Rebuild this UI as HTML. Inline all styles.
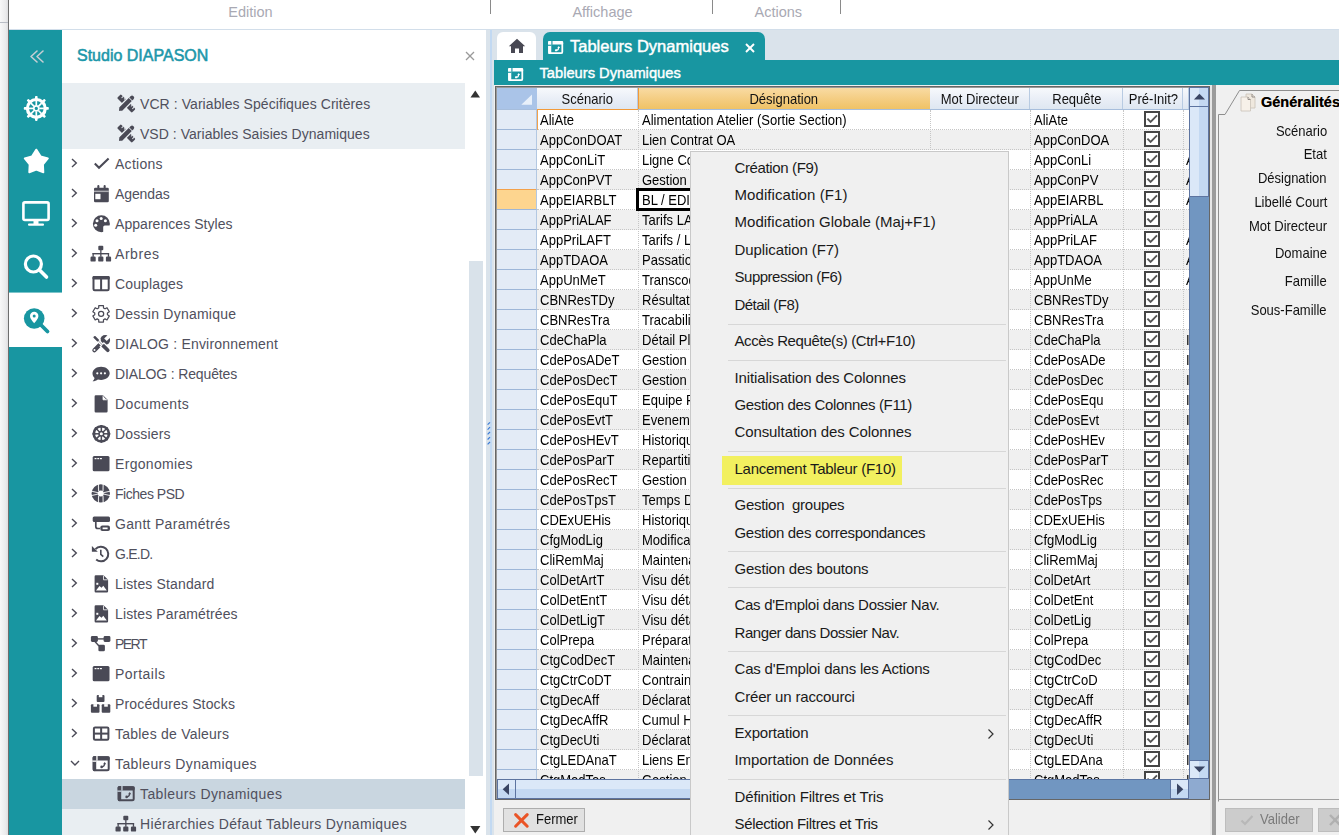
<!DOCTYPE html><html><head><meta charset="utf-8"><style>
html,body{margin:0;padding:0;}
body{width:1339px;height:835px;overflow:hidden;position:relative;background:#fff;font-family:"Liberation Sans",sans-serif;}
.t{position:absolute;white-space:pre;}
.b{position:absolute;}
svg{position:absolute;overflow:visible;}
</style></head><body>
<div class="b" style="left:0px;top:0px;width:8px;height:835px;background:linear-gradient(90deg,#f8f8f8,#ebebec 70%,#dedee0);"></div>
<div class="b" style="left:0px;top:22px;width:8px;height:1px;background:#b9bdc5;"></div>
<div class="b" style="left:8px;top:0px;width:1px;height:835px;background:#6e6e6e;"></div>
<div class="b" style="left:9px;top:29px;width:1330px;height:1px;background:#d2deea;"></div>
<div class="b" style="left:490px;top:0px;width:1px;height:14px;background:#8a8a8a;"></div>
<div class="b" style="left:712px;top:0px;width:1px;height:14px;background:#8a8a8a;"></div>
<div class="b" style="left:840px;top:0px;width:1px;height:14px;background:#8a8a8a;"></div>
<div class="t" style="left:190.5px;width:120px;text-align:center;top:2.98px;font-size:14.5px;line-height:19px;color:#a9a9b3;">Edition</div>
<div class="t" style="left:542.5px;width:120px;text-align:center;top:2.98px;font-size:14.5px;line-height:19px;color:#a9a9b3;">Affichage</div>
<div class="t" style="left:718.3px;width:120px;text-align:center;top:2.98px;font-size:14.5px;line-height:19px;color:#a9a9b3;">Actions</div>
<div class="b" style="left:9px;top:30px;width:52.5px;height:805px;background:#1896a1;"></div>
<div class="b" style="left:9px;top:292px;width:52.5px;height:1px;background:#7cc4ca;"></div>
<div class="b" style="left:9px;top:293px;width:52.5px;height:54px;background:#fff;"></div>
<svg style="left:0;top:0" width="62" height="360" viewBox="0 0 62 360">
<g fill="none" stroke="#c5ced3" stroke-width="1.6" stroke-linecap="round" stroke-linejoin="round">
<polyline points="37,51 31,56.5 37,62"/><polyline points="43,51 37,56.5 43,62"/></g>
<g transform="translate(36.3,108.4)"><circle r="8.9" fill="none" stroke="#fff" stroke-width="3.2"/><rect x="-1.3" y="-12.5" width="2.6" height="4" rx="0.8" fill="#fff" transform="rotate(0)"/><line x1="0" y1="-3" x2="0" y2="-7.6" stroke="#fff" stroke-width="1.7" transform="rotate(0)"/><rect x="-1.3" y="-12.5" width="2.6" height="4" rx="0.8" fill="#fff" transform="rotate(45)"/><line x1="0" y1="-3" x2="0" y2="-7.6" stroke="#fff" stroke-width="1.7" transform="rotate(45)"/><rect x="-1.3" y="-12.5" width="2.6" height="4" rx="0.8" fill="#fff" transform="rotate(90)"/><line x1="0" y1="-3" x2="0" y2="-7.6" stroke="#fff" stroke-width="1.7" transform="rotate(90)"/><rect x="-1.3" y="-12.5" width="2.6" height="4" rx="0.8" fill="#fff" transform="rotate(135)"/><line x1="0" y1="-3" x2="0" y2="-7.6" stroke="#fff" stroke-width="1.7" transform="rotate(135)"/><rect x="-1.3" y="-12.5" width="2.6" height="4" rx="0.8" fill="#fff" transform="rotate(180)"/><line x1="0" y1="-3" x2="0" y2="-7.6" stroke="#fff" stroke-width="1.7" transform="rotate(180)"/><rect x="-1.3" y="-12.5" width="2.6" height="4" rx="0.8" fill="#fff" transform="rotate(225)"/><line x1="0" y1="-3" x2="0" y2="-7.6" stroke="#fff" stroke-width="1.7" transform="rotate(225)"/><rect x="-1.3" y="-12.5" width="2.6" height="4" rx="0.8" fill="#fff" transform="rotate(270)"/><line x1="0" y1="-3" x2="0" y2="-7.6" stroke="#fff" stroke-width="1.7" transform="rotate(270)"/><rect x="-1.3" y="-12.5" width="2.6" height="4" rx="0.8" fill="#fff" transform="rotate(315)"/><line x1="0" y1="-3" x2="0" y2="-7.6" stroke="#fff" stroke-width="1.7" transform="rotate(315)"/><circle r="2.5" fill="none" stroke="#fff" stroke-width="1.7"/></g>
<path fill="#fff" d="M36.3,149.6 L40.6,156.3 L47.9,158.4 L43,164.4 L43.4,172.3 L36.3,169.6 L29.2,172.3 L29.6,164.4 L24.7,158.4 L32,156.3 Z" stroke="#fff" stroke-width="1.8" stroke-linejoin="round"/>
<rect x="23.4" y="202.4" width="25.2" height="17.6" rx="1.5" fill="none" stroke="#fff" stroke-width="2.6"/>
<rect x="33.5" y="221" width="5" height="3.5" fill="#fff"/>
<rect x="28" y="223.6" width="16" height="2.2" rx="1" fill="#fff"/>
<circle cx="33.4" cy="264" r="8" fill="none" stroke="#fff" stroke-width="3.2"/>
<line x1="39.5" y1="270" x2="46.5" y2="277" stroke="#fff" stroke-width="3.6" stroke-linecap="round"/>
<circle cx="34.2" cy="318.5" r="10.3" fill="#1896a1"/>
<line x1="41" y1="325" x2="47.5" y2="331.5" stroke="#1896a1" stroke-width="3.8" stroke-linecap="round"/>
<path d="M34.2,311.8 a4.2,4.2 0 0 1 4.2,4.2 c0,3 -4.2,7.2 -4.2,7.2 c0,0 -4.2,-4.2 -4.2,-7.2 a4.2,4.2 0 0 1 4.2,-4.2 z" fill="#fff"/>
<circle cx="34.2" cy="316" r="1.5" fill="#1896a1"/>
</svg>
<div class="b" style="left:61.5px;top:30px;width:424.5px;height:805px;background:#fff;"></div>
<div class="t" style="left:77px;top:45.36px;font-size:16px;line-height:21px;color:#1d97aa;-webkit-text-stroke:0.55px #1d97aa;">Studio DIAPASON</div>
<svg style="left:464px;top:50px" width="12" height="12"><g stroke="#9a9a9a" stroke-width="1.3"><line x1="2" y1="2" x2="10" y2="10"/><line x1="10" y1="2" x2="2" y2="10"/></g></svg>
<div class="b" style="left:62px;top:83px;width:403px;height:66px;background:#e9eef2;"></div>
<div class="b" style="left:62px;top:779px;width:403px;height:30px;background:#c9d6e0;"></div>
<div class="b" style="left:62px;top:809px;width:403px;height:26px;background:#e9eef2;"></div>
<svg style="left:116px;top:94.8px" width="20" height="18" viewBox="0 0 20 18"><g transform="translate(10.3,8.5) scale(0.9) rotate(45)" fill="#4a4a56"><rect x="-11.6" y="-3" width="23.2" height="6" rx="1.2"/><g fill="#e9eef2"><rect x="-8.6" y="-3.2" width="1.1" height="2.6"/><rect x="-5.4" y="-3.2" width="1.1" height="1.7"/><rect x="5.4" y="-3.2" width="1.1" height="1.7"/><rect x="8.4" y="-3.2" width="1.1" height="2.6"/></g></g><g transform="translate(10.3,8.5) scale(0.9) rotate(-45)"><path d="M-12.6,0 L-8.8,-3.1 L9,-3.1 A3.1,3.1 0 0 1 9,3.1 L-8.8,3.1 Z" fill="#4a4a56" stroke="#e9eef2" stroke-width="1.4"/><rect x="6.3" y="-3.2" width="0.9" height="6.4" fill="#e9eef2"/></g></svg>
<div class="t" style="left:140px;top:94.95px;font-size:14px;line-height:18px;color:#50505d;letter-spacing:0.071px;">VCR : Variables Spécifiques Critères</div>
<svg style="left:116px;top:124.8px" width="20" height="18" viewBox="0 0 20 18"><g transform="translate(10.3,8.5) scale(0.9) rotate(45)" fill="#4a4a56"><rect x="-11.6" y="-3" width="23.2" height="6" rx="1.2"/><g fill="#e9eef2"><rect x="-8.6" y="-3.2" width="1.1" height="2.6"/><rect x="-5.4" y="-3.2" width="1.1" height="1.7"/><rect x="5.4" y="-3.2" width="1.1" height="1.7"/><rect x="8.4" y="-3.2" width="1.1" height="2.6"/></g></g><g transform="translate(10.3,8.5) scale(0.9) rotate(-45)"><path d="M-12.6,0 L-8.8,-3.1 L9,-3.1 A3.1,3.1 0 0 1 9,3.1 L-8.8,3.1 Z" fill="#4a4a56" stroke="#e9eef2" stroke-width="1.4"/><rect x="6.3" y="-3.2" width="0.9" height="6.4" fill="#e9eef2"/></g></svg>
<div class="t" style="left:140px;top:124.95px;font-size:14px;line-height:18px;color:#50505d;letter-spacing:0.036px;">VSD : Variables Saisies Dynamiques</div>
<svg style="left:70px;top:157.5px" width="10" height="10"><polyline points="2,1 6.3,5 2,9" fill="none" stroke="#4a4a56" stroke-width="1.4"/></svg>
<svg style="left:91px;top:154.8px" width="20" height="18" viewBox="0 0 20 18"><polyline points="3.8,8.6 8,12.8 17.6,3.6" fill="none" stroke="#4a4a56" stroke-width="2.1"/></svg>
<div class="t" style="left:115px;top:154.95px;font-size:14px;line-height:18px;color:#50505d;letter-spacing:0.280px;">Actions</div>
<svg style="left:70px;top:187.5px" width="10" height="10"><polyline points="2,1 6.3,5 2,9" fill="none" stroke="#4a4a56" stroke-width="1.4"/></svg>
<svg style="left:91px;top:184.8px" width="20" height="18" viewBox="0 0 20 18"><g fill="#4a4a56"><rect x="3" y="2.7" width="14.8" height="14.5" rx="1.3"/><rect x="6.3" y="0.1" width="2.1" height="3.5" rx="1"/><rect x="12.6" y="0.1" width="2.1" height="3.5" rx="1"/></g><rect x="3" y="5.6" width="14.8" height="1.5" fill="#fff" fill-opacity="0.55"/><rect x="4.3" y="8.8" width="5.2" height="5.4" fill="#fff"/></svg>
<div class="t" style="left:115px;top:184.95px;font-size:14px;line-height:18px;color:#50505d;letter-spacing:-0.097px;">Agendas</div>
<svg style="left:70px;top:217.5px" width="10" height="10"><polyline points="2,1 6.3,5 2,9" fill="none" stroke="#4a4a56" stroke-width="1.4"/></svg>
<svg style="left:91px;top:214.8px" width="20" height="18" viewBox="0 0 20 18"><defs><mask id="pm223"><rect width="20" height="18" fill="#fff"/><rect x="12.2" y="10.5" width="10" height="10" rx="1.6" fill="#000"/><circle cx="6" cy="5.7" r="1.5" fill="#000"/><circle cx="10.2" cy="3.5" r="1.5" fill="#000"/><circle cx="14.4" cy="5.7" r="1.5" fill="#000"/><circle cx="4.7" cy="10.2" r="1.5" fill="#000"/></mask></defs><circle cx="10.4" cy="8.8" r="8.5" fill="#4a4a56" mask="url(#pm223)"/></svg>
<div class="t" style="left:115px;top:214.95px;font-size:14px;line-height:18px;color:#50505d;letter-spacing:0.048px;">Apparences Styles</div>
<svg style="left:70px;top:247.5px" width="10" height="10"><polyline points="2,1 6.3,5 2,9" fill="none" stroke="#4a4a56" stroke-width="1.4"/></svg>
<svg style="left:91px;top:244.8px" width="20" height="18" viewBox="0 0 20 18"><g fill="#4a4a56"><rect x="7.3" y="0.8" width="5" height="4.4" rx="1"/><rect x="-0.5" y="11.6" width="5.2" height="5" rx="1.2"/><rect x="7.2" y="11.6" width="5.2" height="5" rx="1.2"/><rect x="14.9" y="11.6" width="5.2" height="5" rx="1.2"/><rect x="9.2" y="5" width="1.3" height="6.8"/><rect x="1.5" y="8" width="16.6" height="1.4"/><rect x="1.5" y="8" width="1.3" height="3.8"/><rect x="16.8" y="8" width="1.3" height="3.8"/></g></svg>
<div class="t" style="left:115px;top:244.95px;font-size:14px;line-height:18px;color:#50505d;letter-spacing:0.553px;">Arbres</div>
<svg style="left:70px;top:277.5px" width="10" height="10"><polyline points="2,1 6.3,5 2,9" fill="none" stroke="#4a4a56" stroke-width="1.4"/></svg>
<svg style="left:91px;top:274.8px" width="20" height="18" viewBox="0 0 20 18"><rect x="2.5" y="2.1" width="15.2" height="13.1" rx="1.2" fill="none" stroke="#4a4a56" stroke-width="2"/><rect x="1.5" y="1.1" width="17.2" height="3.3" rx="1.2" fill="#4a4a56"/><rect x="9.1" y="3" width="2" height="12" fill="#4a4a56"/></svg>
<div class="t" style="left:115px;top:274.95px;font-size:14px;line-height:18px;color:#50505d;letter-spacing:0.133px;">Couplages</div>
<svg style="left:70px;top:307.5px" width="10" height="10"><polyline points="2,1 6.3,5 2,9" fill="none" stroke="#4a4a56" stroke-width="1.4"/></svg>
<svg style="left:91px;top:304.8px" width="20" height="18" viewBox="0 0 20 18"><path d="M7.76,0.68 L12.44,0.68 L12.50,2.92 L14.04,3.81 L16.00,2.74 L18.35,6.79 L16.44,7.96 L16.44,9.74 L18.35,10.91 L16.00,14.96 L14.04,13.89 L12.50,14.78 L12.44,17.02 L7.76,17.02 L7.70,14.78 L6.16,13.89 L4.20,14.96 L1.85,10.91 L3.76,9.74 L3.76,7.96 L1.85,6.79 L4.20,2.74 L6.16,3.81 L7.70,2.92 Z" fill="none" stroke="#4a4a56" stroke-width="1.25" stroke-linejoin="round"/><circle cx="10.1" cy="8.85" r="2.6" fill="none" stroke="#4a4a56" stroke-width="1.25"/></svg>
<div class="t" style="left:115px;top:304.95px;font-size:14px;line-height:18px;color:#50505d;letter-spacing:0.234px;">Dessin Dynamique</div>
<svg style="left:70px;top:337.5px" width="10" height="10"><polyline points="2,1 6.3,5 2,9" fill="none" stroke="#4a4a56" stroke-width="1.4"/></svg>
<svg style="left:91px;top:334.8px" width="20" height="18" viewBox="0 0 20 18"><line x1="3.4" y1="15.2" x2="12.8" y2="5.8" stroke="#4a4a56" stroke-width="4.2" stroke-linecap="round"/><circle cx="14.2" cy="5" r="4.9" fill="#4a4a56"/><rect x="-1.8" y="-4.5" width="3.6" height="7.5" transform="translate(16.6,2.6) rotate(45)" fill="#fff"/><circle cx="3.5" cy="15.1" r="1" fill="#fff"/><g transform="translate(10.4,8.95) rotate(45)" stroke="#fff" stroke-width="1.3" fill="#4a4a56"><path d="M-3.6,-0.9 L1,-0.9 L1,-2.5 L9,-2.5 A2.5,2.5 0 0 1 9,2.5 L1,2.5 L1,0.9 L-3.6,0.9 L-3.6,1.9 L-10.6,1.9 L-11.4,0 L-10.6,-1.9 L-3.6,-1.9 Z"/></g></svg>
<div class="t" style="left:115px;top:334.95px;font-size:14px;line-height:18px;color:#50505d;letter-spacing:0.202px;">DIALOG : Environnement</div>
<svg style="left:70px;top:367.5px" width="10" height="10"><polyline points="2,1 6.3,5 2,9" fill="none" stroke="#4a4a56" stroke-width="1.4"/></svg>
<svg style="left:91px;top:364.8px" width="20" height="18" viewBox="0 0 20 18"><path fill="#4a4a56" d="M10.1,1.7 C14.9,1.7 18.7,4.6 18.7,8.3 C18.7,12 14.9,14.9 10.1,14.9 C9,14.9 7.9,14.7 6.9,14.4 C5.5,15.5 3.7,16.2 1.6,16.3 C2.6,15.4 3.3,14.3 3.6,13.1 C2.3,11.9 1.5,10.2 1.5,8.3 C1.5,4.6 5.3,1.7 10.1,1.7 Z"/><g fill="#fff"><circle cx="6.3" cy="8.3" r="1.1"/><circle cx="10.1" cy="8.3" r="1.1"/><circle cx="13.9" cy="8.3" r="1.1"/></g></svg>
<div class="t" style="left:115px;top:364.95px;font-size:14px;line-height:18px;color:#50505d;letter-spacing:-0.145px;">DIALOG : Requêtes</div>
<svg style="left:70px;top:397.5px" width="10" height="10"><polyline points="2,1 6.3,5 2,9" fill="none" stroke="#4a4a56" stroke-width="1.4"/></svg>
<svg style="left:91px;top:394.8px" width="20" height="18" viewBox="0 0 20 18"><path fill="#4a4a56" d="M4.8,0.2 L12,0.2 L16.6,4.8 L16.6,16.3 A1.2,1.2 0 0 1 15.4,17.5 L4.8,17.5 A1.2,1.2 0 0 1 3.6,16.3 L3.6,1.4 A1.2,1.2 0 0 1 4.8,0.2 Z"/><path fill="#fff" d="M12,1.2 L12,4.8 L15.6,4.8 Z"/><path d="M12,0.6 L12,4.8 L16.2,4.8" fill="none" stroke="#fff" stroke-width="0.8"/></svg>
<div class="t" style="left:115px;top:394.95px;font-size:14px;line-height:18px;color:#50505d;letter-spacing:0.373px;">Documents</div>
<svg style="left:70px;top:427.5px" width="10" height="10"><polyline points="2,1 6.3,5 2,9" fill="none" stroke="#4a4a56" stroke-width="1.4"/></svg>
<svg style="left:91px;top:424.8px" width="20" height="18" viewBox="0 0 20 18"><g transform="translate(10.35,8.8)"><circle r="7.6" fill="none" stroke="#4a4a56" stroke-width="2.6"/><rect x="-1" y="-8.9" width="2" height="3" rx="0.6" fill="#4a4a56" transform="rotate(0)"/><line x1="0" y1="-2.2" x2="0" y2="-6.5" stroke="#4a4a56" stroke-width="1.5" transform="rotate(0)"/><rect x="-1" y="-8.9" width="2" height="3" rx="0.6" fill="#4a4a56" transform="rotate(45)"/><line x1="0" y1="-2.2" x2="0" y2="-6.5" stroke="#4a4a56" stroke-width="1.5" transform="rotate(45)"/><rect x="-1" y="-8.9" width="2" height="3" rx="0.6" fill="#4a4a56" transform="rotate(90)"/><line x1="0" y1="-2.2" x2="0" y2="-6.5" stroke="#4a4a56" stroke-width="1.5" transform="rotate(90)"/><rect x="-1" y="-8.9" width="2" height="3" rx="0.6" fill="#4a4a56" transform="rotate(135)"/><line x1="0" y1="-2.2" x2="0" y2="-6.5" stroke="#4a4a56" stroke-width="1.5" transform="rotate(135)"/><rect x="-1" y="-8.9" width="2" height="3" rx="0.6" fill="#4a4a56" transform="rotate(180)"/><line x1="0" y1="-2.2" x2="0" y2="-6.5" stroke="#4a4a56" stroke-width="1.5" transform="rotate(180)"/><rect x="-1" y="-8.9" width="2" height="3" rx="0.6" fill="#4a4a56" transform="rotate(225)"/><line x1="0" y1="-2.2" x2="0" y2="-6.5" stroke="#4a4a56" stroke-width="1.5" transform="rotate(225)"/><rect x="-1" y="-8.9" width="2" height="3" rx="0.6" fill="#4a4a56" transform="rotate(270)"/><line x1="0" y1="-2.2" x2="0" y2="-6.5" stroke="#4a4a56" stroke-width="1.5" transform="rotate(270)"/><rect x="-1" y="-8.9" width="2" height="3" rx="0.6" fill="#4a4a56" transform="rotate(315)"/><line x1="0" y1="-2.2" x2="0" y2="-6.5" stroke="#4a4a56" stroke-width="1.5" transform="rotate(315)"/><circle r="2.3" fill="none" stroke="#4a4a56" stroke-width="1.5"/></g></svg>
<div class="t" style="left:115px;top:424.95px;font-size:14px;line-height:18px;color:#50505d;letter-spacing:0.147px;">Dossiers</div>
<svg style="left:70px;top:457.5px" width="10" height="10"><polyline points="2,1 6.3,5 2,9" fill="none" stroke="#4a4a56" stroke-width="1.4"/></svg>
<svg style="left:91px;top:454.8px" width="20" height="18" viewBox="0 0 20 18"><rect x="1.7" y="1.1" width="16.8" height="15.1" rx="1.5" fill="#4a4a56"/><g fill="#fff"><rect x="3.6" y="3" width="1.9" height="1.2"/><rect x="6.3" y="3" width="1.9" height="1.2"/><rect x="9" y="3" width="1.9" height="1.2"/></g></svg>
<div class="t" style="left:115px;top:454.95px;font-size:14px;line-height:18px;color:#50505d;letter-spacing:0.322px;">Ergonomies</div>
<svg style="left:70px;top:487.5px" width="10" height="10"><polyline points="2,1 6.3,5 2,9" fill="none" stroke="#4a4a56" stroke-width="1.4"/></svg>
<svg style="left:91px;top:484.8px" width="20" height="18" viewBox="0 0 20 18"><g transform="translate(9.8,8.4)"><circle r="9.2" fill="#4a4a56"/><circle r="3" fill="#fff"/><g stroke="#fff" stroke-width="1.1" stroke-opacity="0.85"><line x1="-10" y1="-2.4" x2="-2.6" y2="-0.6"/><line x1="-10" y1="2.4" x2="-2.6" y2="0.6"/><line x1="10" y1="-2.4" x2="2.6" y2="-0.6"/><line x1="10" y1="2.4" x2="2.6" y2="0.6"/><line x1="-2.4" y1="-10" x2="-2.2" y2="-2.4"/><line x1="2.4" y1="-10" x2="2.2" y2="-2.4"/><line x1="-2.4" y1="10" x2="-2.2" y2="2.4"/><line x1="2.4" y1="10" x2="2.2" y2="2.4"/></g></g></svg>
<div class="t" style="left:115px;top:484.95px;font-size:14px;line-height:18px;color:#50505d;letter-spacing:-0.469px;">Fiches PSD</div>
<svg style="left:70px;top:517.5px" width="10" height="10"><polyline points="2,1 6.3,5 2,9" fill="none" stroke="#4a4a56" stroke-width="1.4"/></svg>
<svg style="left:91px;top:514.8px" width="20" height="18" viewBox="0 0 20 18"><rect x="1.7" y="1.5" width="17.3" height="5.6" rx="1.5" fill="#4a4a56"/><path d="M4.8,7 L4.8,11.5 A2,2 0 0 0 6.8,13.5 L9,13.5" fill="none" stroke="#4a4a56" stroke-width="1.7"/><rect x="9.3" y="10.6" width="9.7" height="5.5" rx="2" fill="#4a4a56"/><rect x="11.6" y="12.5" width="5" height="1.7" fill="#fff"/></svg>
<div class="t" style="left:115px;top:514.95px;font-size:14px;line-height:18px;color:#50505d;letter-spacing:0.306px;">Gantt Paramétrés</div>
<svg style="left:70px;top:547.5px" width="10" height="10"><polyline points="2,1 6.3,5 2,9" fill="none" stroke="#4a4a56" stroke-width="1.4"/></svg>
<svg style="left:91px;top:544.8px" width="20" height="18" viewBox="0 0 20 18"><path d="M4.5,4.2 A7.3,7.3 0 1 1 5.2,14.6" fill="none" stroke="#4a4a56" stroke-width="2"/><path d="M0.9,0.9 L0.9,6.8 L6.8,6.8 Z" fill="#4a4a56"/><polyline points="9.8,4.8 9.8,9.3 12.3,11.6" fill="none" stroke="#4a4a56" stroke-width="1.6"/></svg>
<div class="t" style="left:115px;top:544.95px;font-size:14px;line-height:18px;color:#50505d;letter-spacing:-0.763px;">G.E.D.</div>
<svg style="left:70px;top:577.5px" width="10" height="10"><polyline points="2,1 6.3,5 2,9" fill="none" stroke="#4a4a56" stroke-width="1.4"/></svg>
<svg style="left:91px;top:574.8px" width="20" height="18" viewBox="0 0 20 18"><path fill="#4a4a56" d="M4.8,0.2 L12.5,0.2 L17.1,4.8 L17.1,16.3 A1.2,1.2 0 0 1 15.9,17.5 L4.8,17.5 A1.2,1.2 0 0 1 3.6,16.3 L3.6,1.4 A1.2,1.2 0 0 1 4.8,0.2 Z"/><path d="M12.5,0.6 L12.5,4.8 L16.7,4.8" fill="none" stroke="#fff" stroke-width="0.8"/><rect x="5.3" y="7.8" width="2" height="2" fill="#fff"/><path d="M5,15.5 L8.5,11 L10.5,12.8 L12.3,10.8 L15.8,15.5 Z" fill="#fff"/></svg>
<div class="t" style="left:115px;top:574.95px;font-size:14px;line-height:18px;color:#50505d;letter-spacing:0.150px;">Listes Standard</div>
<svg style="left:70px;top:607.5px" width="10" height="10"><polyline points="2,1 6.3,5 2,9" fill="none" stroke="#4a4a56" stroke-width="1.4"/></svg>
<svg style="left:91px;top:604.8px" width="20" height="18" viewBox="0 0 20 18"><path fill="#4a4a56" d="M4.8,0.2 L12.5,0.2 L17.1,4.8 L17.1,16.3 A1.2,1.2 0 0 1 15.9,17.5 L4.8,17.5 A1.2,1.2 0 0 1 3.6,16.3 L3.6,1.4 A1.2,1.2 0 0 1 4.8,0.2 Z"/><path d="M12.5,0.6 L12.5,4.8 L16.7,4.8" fill="none" stroke="#fff" stroke-width="0.8"/><rect x="5.3" y="7.8" width="2" height="2" fill="#fff"/><path d="M5,15.5 L8.5,11 L10.5,12.8 L12.3,10.8 L15.8,15.5 Z" fill="#fff"/></svg>
<div class="t" style="left:115px;top:604.95px;font-size:14px;line-height:18px;color:#50505d;letter-spacing:0.118px;">Listes Paramétrées</div>
<svg style="left:70px;top:637.5px" width="10" height="10"><polyline points="2,1 6.3,5 2,9" fill="none" stroke="#4a4a56" stroke-width="1.4"/></svg>
<svg style="left:91px;top:634.8px" width="20" height="18" viewBox="0 0 20 18"><g fill="#4a4a56"><rect x="-0.1" y="1.1" width="7" height="5.8" rx="1.3"/><rect x="12.6" y="1.1" width="6.8" height="5.8" rx="1.3"/><rect x="7.4" y="9.8" width="6.5" height="6.4" rx="1.3"/></g><g stroke="#4a4a56" stroke-width="1.4" fill="none"><line x1="6" y1="3.9" x2="13" y2="3.9"/><path d="M3.5,6 L8,11"/></g></svg>
<div class="t" style="left:115px;top:634.95px;font-size:14px;line-height:18px;color:#50505d;letter-spacing:-1.531px;">PERT</div>
<svg style="left:70px;top:667.5px" width="10" height="10"><polyline points="2,1 6.3,5 2,9" fill="none" stroke="#4a4a56" stroke-width="1.4"/></svg>
<svg style="left:91px;top:664.8px" width="20" height="18" viewBox="0 0 20 18"><rect x="1.7" y="1.1" width="16.8" height="15.1" rx="1.5" fill="#4a4a56"/><g fill="#fff"><rect x="3.6" y="3" width="1.9" height="1.2"/><rect x="6.3" y="3" width="1.9" height="1.2"/><rect x="9" y="3" width="1.9" height="1.2"/></g></svg>
<div class="t" style="left:115px;top:664.95px;font-size:14px;line-height:18px;color:#50505d;letter-spacing:0.473px;">Portails</div>
<svg style="left:70px;top:697.5px" width="10" height="10"><polyline points="2,1 6.3,5 2,9" fill="none" stroke="#4a4a56" stroke-width="1.4"/></svg>
<svg style="left:91px;top:694.8px" width="20" height="18" viewBox="0 0 20 18"><g fill="#4a4a56"><rect x="5.7" y="-0.1" width="7.8" height="7" rx="1"/><rect x="-0.1" y="9.2" width="8.6" height="8.5" rx="1"/><rect x="10.7" y="9.2" width="8.6" height="8.5" rx="1"/></g><g fill="#fff"><rect x="7.8" y="-0.2" width="3.6" height="2.4"/><rect x="2.4" y="9.1" width="3.6" height="2.6"/><rect x="13.2" y="9.1" width="3.6" height="2.6"/></g></svg>
<div class="t" style="left:115px;top:694.95px;font-size:14px;line-height:18px;color:#50505d;letter-spacing:0.150px;">Procédures Stocks</div>
<svg style="left:70px;top:727.5px" width="10" height="10"><polyline points="2,1 6.3,5 2,9" fill="none" stroke="#4a4a56" stroke-width="1.4"/></svg>
<svg style="left:91px;top:724.8px" width="20" height="18" viewBox="0 0 20 18"><rect x="2.9" y="2.4" width="14.5" height="12.4" rx="1.2" fill="none" stroke="#4a4a56" stroke-width="2"/><rect x="9.15" y="2.5" width="2" height="12.3" fill="#4a4a56"/><rect x="2.9" y="7.6" width="14.5" height="2" fill="#4a4a56"/></svg>
<div class="t" style="left:115px;top:724.95px;font-size:14px;line-height:18px;color:#50505d;letter-spacing:0.235px;">Tables de Valeurs</div>
<svg style="left:70px;top:757.5px" width="10" height="10"><polyline points="1,3 5,7 9,3" fill="none" stroke="#4a4a56" stroke-width="1.4"/></svg>
<svg style="left:91px;top:754.8px" width="20" height="18" viewBox="0 0 20 18"><rect x="2.7" y="2.2" width="15" height="13" rx="1.5" fill="none" stroke="#4a4a56" stroke-width="2"/><rect x="1.7" y="1.2" width="17" height="4.2" rx="1.4" fill="#4a4a56"/><rect x="1.7" y="1.2" width="3.5" height="15" rx="1.4" fill="#4a4a56"/><rect x="5.3" y="0.8" width="1.3" height="4.8" fill="#fff"/><rect x="1.3" y="5.5" width="4" height="1.3" fill="#fff"/><path d="M10.3,12 C12.3,12 13.6,10.8 13.6,8.6" fill="none" stroke="#4a4a56" stroke-width="1.3"/><circle cx="10.6" cy="11.9" r="1.3" fill="#4a4a56"/><path d="M12.1,9.2 L13.7,7 L15.2,9.2 Z" fill="#4a4a56"/></svg>
<div class="t" style="left:115px;top:754.95px;font-size:14px;line-height:18px;color:#50505d;letter-spacing:0.387px;">Tableurs Dynamiques</div>
<svg style="left:116px;top:784.8px" width="20" height="18" viewBox="0 0 20 18"><rect x="2.7" y="2.2" width="15" height="13" rx="1.5" fill="none" stroke="#4a4a56" stroke-width="2"/><rect x="1.7" y="1.2" width="17" height="4.2" rx="1.4" fill="#4a4a56"/><rect x="1.7" y="1.2" width="3.5" height="15" rx="1.4" fill="#4a4a56"/><rect x="5.3" y="0.8" width="1.3" height="4.8" fill="#c9d6e0"/><rect x="1.3" y="5.5" width="4" height="1.3" fill="#c9d6e0"/><path d="M10.3,12 C12.3,12 13.6,10.8 13.6,8.6" fill="none" stroke="#4a4a56" stroke-width="1.3"/><circle cx="10.6" cy="11.9" r="1.3" fill="#4a4a56"/><path d="M12.1,9.2 L13.7,7 L15.2,9.2 Z" fill="#4a4a56"/></svg>
<div class="t" style="left:140px;top:784.95px;font-size:14px;line-height:18px;color:#50505d;letter-spacing:0.404px;">Tableurs Dynamiques</div>
<svg style="left:116px;top:814.8px" width="20" height="18" viewBox="0 0 20 18"><g fill="#4a4a56"><rect x="7.3" y="0.8" width="5" height="4.4" rx="1"/><rect x="-0.5" y="11.6" width="5.2" height="5" rx="1.2"/><rect x="7.2" y="11.6" width="5.2" height="5" rx="1.2"/><rect x="14.9" y="11.6" width="5.2" height="5" rx="1.2"/><rect x="9.2" y="5" width="1.3" height="6.8"/><rect x="1.5" y="8" width="16.6" height="1.4"/><rect x="1.5" y="8" width="1.3" height="3.8"/><rect x="16.8" y="8" width="1.3" height="3.8"/></g></svg>
<div class="t" style="left:140px;top:814.95px;font-size:14px;line-height:18px;color:#50505d;letter-spacing:0.338px;">Hiérarchies Défaut Tableurs Dynamiques</div>
<svg style="left:469px;top:89px" width="14" height="10"><path d="M1.5,8.5 L6.3,1.5 L11,8.5 Z" fill="#333"/></svg>
<div class="b" style="left:469px;top:261px;width:14px;height:515px;background:#d9e2ea;"></div>
<svg style="left:469px;top:824px" width="14" height="10"><path d="M1.2,2 L11.4,2 L6.3,9.4 Z" fill="#333"/></svg>
<div class="b" style="left:486px;top:30px;width:9px;height:805px;background:#dae3eb;"></div>
<div class="b" style="left:490px;top:30px;width:2px;height:805px;background:#c2d9f2;"></div>
<svg style="left:485px;top:418px" width="8" height="30"><line x1="2.6" y1="6.7" x2="5" y2="4.3" stroke="#3b7bd6" stroke-width="1.2"/><line x1="2.6" y1="11.6" x2="5" y2="9.2" stroke="#3b7bd6" stroke-width="1.2"/><line x1="2.6" y1="16.4" x2="5" y2="14.0" stroke="#3b7bd6" stroke-width="1.2"/><line x1="2.6" y1="21.5" x2="5" y2="19.1" stroke="#3b7bd6" stroke-width="1.2"/><line x1="2.6" y1="26.4" x2="5" y2="24.0" stroke="#3b7bd6" stroke-width="1.2"/></svg>
<div class="b" style="left:495px;top:30px;width:844px;height:30px;background:#dae3eb;"></div>
<div class="b" style="left:497px;top:32px;width:38.5px;height:28px;background:#fff;border-radius:6px 6px 0 0;"></div>
<svg style="left:508px;top:38px" width="18" height="16" viewBox="0 0 18 16"><path d="M9,0.8 L17.2,8.2 L15,8.2 L15,15 L11,15 L11,10.5 L7,10.5 L7,15 L3,15 L3,8.2 L0.8,8.2 Z" fill="#484853"/></svg>
<div class="b" style="left:542.5px;top:32px;width:222px;height:30px;background:#1896a1;border-radius:7px 7px 0 0;"></div>
<svg style="left:548px;top:40px" width="15" height="15" viewBox="1.5 1 17 15.4"><rect x="2.7" y="2.2" width="15" height="13" rx="1.5" fill="none" stroke="#fff" stroke-width="2"/><rect x="1.7" y="1.2" width="17" height="4.2" rx="1.4" fill="#fff"/><rect x="1.7" y="1.2" width="3.5" height="15" rx="1.4" fill="#fff"/><rect x="5.3" y="0.8" width="1.3" height="4.8" fill="#1896a1"/><rect x="1.3" y="5.5" width="4" height="1.3" fill="#1896a1"/><path d="M10.3,12 C12.3,12 13.6,10.8 13.6,8.6" fill="none" stroke="#fff" stroke-width="1.3"/><circle cx="10.6" cy="11.9" r="1.3" fill="#fff"/><path d="M12.1,9.2 L13.7,7 L15.2,9.2 Z" fill="#fff"/></svg>
<div class="t" style="left:570px;top:35.78px;font-size:16.5px;line-height:21px;color:#fff;-webkit-text-stroke:0.45px #fff;">Tableurs Dynamiques</div>
<svg style="left:745px;top:43px" width="10" height="10"><g stroke="#fff" stroke-width="1.9"><line x1="1" y1="1" x2="9" y2="9"/><line x1="9" y1="1" x2="1" y2="9"/></g></svg>
<div class="b" style="left:494px;top:60px;width:845px;height:25px;background:#1896a1;"></div>
<svg style="left:508px;top:67px" width="15" height="15" viewBox="1.5 1 17 15.4"><rect x="2.7" y="2.2" width="15" height="13" rx="1.5" fill="none" stroke="#fff" stroke-width="2"/><rect x="1.7" y="1.2" width="17" height="4.2" rx="1.4" fill="#fff"/><rect x="1.7" y="1.2" width="3.5" height="15" rx="1.4" fill="#fff"/><rect x="5.3" y="0.8" width="1.3" height="4.8" fill="#1896a1"/><rect x="1.3" y="5.5" width="4" height="1.3" fill="#1896a1"/><path d="M10.3,12 C12.3,12 13.6,10.8 13.6,8.6" fill="none" stroke="#fff" stroke-width="1.3"/><circle cx="10.6" cy="11.9" r="1.3" fill="#fff"/><path d="M12.1,9.2 L13.7,7 L15.2,9.2 Z" fill="#fff"/></svg>
<div class="t" style="left:539.5px;top:64.11px;font-size:14.7px;line-height:19px;color:#fff;-webkit-text-stroke:0.4px #fff;">Tableurs Dynamiques</div>
<div class="b" style="left:494px;top:85px;width:845px;height:750px;background:#f0f0f0;"></div>
<div class="b" style="left:495px;top:86px;width:715px;height:714px;background:#9a9a9a;border:1px solid #666;box-sizing:border-box;"></div>
<div class="b" style="left:497px;top:88px;width:40px;height:22px;background:#aac4e8;"></div>
<svg style="left:497px;top:88px" width="40" height="21"><path d="M35,6.6 L35,16.7 L24.3,16.7 Z" fill="#e8f0fa"/></svg>
<div class="b" style="left:537px;top:88px;width:101px;height:22px;background:linear-gradient(#f7f9fc,#e9eef6 50%,#dde6f1);border-right:1px solid #b8cbe2;box-sizing:border-box;"></div>
<div class="t" style="left:531.2012263099219px;width:112.59754738015607px;text-align:center;top:89.68px;font-size:14.5px;line-height:19px;color:#111;transform:scaleX(0.897);transform-origin:50% 0;">Scénario</div>
<div class="b" style="left:638px;top:88px;width:292px;height:22px;background:linear-gradient(#f9dba3,#f4cd82 50%,#efc163);border-left:1px solid #f29a3a;box-sizing:border-box;"></div>
<div class="t" style="left:621.2352285395764px;width:325.52954292084723px;text-align:center;top:89.68px;font-size:14.5px;line-height:19px;color:#111;transform:scaleX(0.897);transform-origin:50% 0;">Désignation</div>
<div class="b" style="left:930px;top:88px;width:100px;height:22px;background:linear-gradient(#f7f9fc,#e9eef6 50%,#dde6f1);border-right:1px solid #b8cbe2;box-sizing:border-box;"></div>
<div class="t" style="left:924.2586399108138px;width:111.48272017837235px;text-align:center;top:89.68px;font-size:14.5px;line-height:19px;color:#111;transform:scaleX(0.897);transform-origin:50% 0;">Mot Directeur</div>
<div class="b" style="left:1030px;top:88px;width:93px;height:22px;background:linear-gradient(#f7f9fc,#e9eef6 50%,#dde6f1);border-right:1px solid #b8cbe2;box-sizing:border-box;"></div>
<div class="t" style="left:1024.660535117057px;width:103.67892976588628px;text-align:center;top:89.68px;font-size:14.5px;line-height:19px;color:#111;transform:scaleX(0.897);transform-origin:50% 0;">Requête</div>
<div class="b" style="left:1123px;top:88px;width:60px;height:22px;background:linear-gradient(#f7f9fc,#e9eef6 50%,#dde6f1);border-right:1px solid #b8cbe2;box-sizing:border-box;"></div>
<div class="t" style="left:1119.5551839464883px;width:66.88963210702342px;text-align:center;top:89.68px;font-size:14.5px;line-height:19px;color:#111;transform:scaleX(0.897);transform-origin:50% 0;">Pré-Init?</div>
<div class="b" style="left:1183px;top:88px;width:6px;height:22px;background:linear-gradient(#f7f9fc,#e9eef6 50%,#dde6f1);border-right:1px solid #b8cbe2;box-sizing:border-box;"></div>
<div class="b" style="left:497px;top:109px;width:692px;height:1px;background:#a7bedc;"></div>
<div class="b" style="left:537px;top:109px;width:101px;height:1px;background:#f29a3a;"></div>
<div class="b" style="left:497px;top:110px;width:692px;height:669px;overflow:hidden;">
<div class="b" style="left:40px;top:0px;width:652px;height:20px;background:#ffffff;"></div>
<div class="b" style="left:0;top:0px;width:40px;height:20px;background:#e3ebf6;border-bottom:1px solid #9db6d8;border-right:1px solid #b3c8e2;box-sizing:border-box;"></div>
<div class="b" style="left:40px;top:19px;width:652px;height:0;border-top:1px dotted #c6c6c6;"></div>
<div class="t" style="left:43px;top:0.58px;font-size:14.5px;line-height:18px;color:#000;width:107.0px;overflow:hidden;transform:scaleX(0.897);transform-origin:0 0;">AliAte</div>
<div class="t" style="left:144.5px;top:0.58px;font-size:14.5px;line-height:18px;color:#000;width:318.8px;overflow:hidden;transform:scaleX(0.897);transform-origin:0 0;">Alimentation Atelier (Sortie Section)</div>
<div class="t" style="left:537px;top:0.58px;font-size:14.5px;line-height:18px;color:#000;width:95.9px;overflow:hidden;transform:scaleX(0.897);transform-origin:0 0;">AliAte</div>
<svg style="left:647px;top:1px" width="16" height="16"><rect x="1" y="1" width="14" height="14" fill="#fff" stroke="#454545" stroke-width="2"/><polyline points="3.4,7.6 6.6,10.8 13,4.4" fill="none" stroke="#555" stroke-width="1.9"/></svg>
<div class="b" style="left:40px;top:20px;width:652px;height:20px;background:#f0f0f0;"></div>
<div class="b" style="left:0;top:20px;width:40px;height:20px;background:#e3ebf6;border-bottom:1px solid #9db6d8;border-right:1px solid #b3c8e2;box-sizing:border-box;"></div>
<div class="b" style="left:40px;top:39px;width:652px;height:0;border-top:1px dotted #c6c6c6;"></div>
<div class="t" style="left:43px;top:20.58px;font-size:14.5px;line-height:18px;color:#000;width:107.0px;overflow:hidden;transform:scaleX(0.897);transform-origin:0 0;">AppConDOAT</div>
<div class="t" style="left:144.5px;top:20.58px;font-size:14.5px;line-height:18px;color:#000;width:318.8px;overflow:hidden;transform:scaleX(0.897);transform-origin:0 0;">Lien Contrat OA</div>
<div class="t" style="left:537px;top:20.58px;font-size:14.5px;line-height:18px;color:#000;width:95.9px;overflow:hidden;transform:scaleX(0.897);transform-origin:0 0;">AppConDOA</div>
<svg style="left:647px;top:21px" width="16" height="16"><rect x="1" y="1" width="14" height="14" fill="#fff" stroke="#454545" stroke-width="2"/><polyline points="3.4,7.6 6.6,10.8 13,4.4" fill="none" stroke="#555" stroke-width="1.9"/></svg>
<div class="b" style="left:40px;top:40px;width:652px;height:20px;background:#ffffff;"></div>
<div class="b" style="left:0;top:40px;width:40px;height:20px;background:#e3ebf6;border-bottom:1px solid #9db6d8;border-right:1px solid #b3c8e2;box-sizing:border-box;"></div>
<div class="b" style="left:40px;top:59px;width:652px;height:0;border-top:1px dotted #c6c6c6;"></div>
<div class="t" style="left:43px;top:40.58px;font-size:14.5px;line-height:18px;color:#000;width:107.0px;overflow:hidden;transform:scaleX(0.897);transform-origin:0 0;">AppConLiT</div>
<div class="t" style="left:144.5px;top:40.58px;font-size:14.5px;line-height:18px;color:#000;width:318.8px;overflow:hidden;transform:scaleX(0.897);transform-origin:0 0;">Ligne Contrat</div>
<div class="t" style="left:537px;top:40.58px;font-size:14.5px;line-height:18px;color:#000;width:95.9px;overflow:hidden;transform:scaleX(0.897);transform-origin:0 0;">AppConLi</div>
<div class="t" style="left:689px;top:40.58px;font-size:14.5px;line-height:18px;color:#000;width:8.9px;overflow:hidden;transform:scaleX(0.897);transform-origin:0 0;">A</div>
<svg style="left:647px;top:41px" width="16" height="16"><rect x="1" y="1" width="14" height="14" fill="#fff" stroke="#454545" stroke-width="2"/><polyline points="3.4,7.6 6.6,10.8 13,4.4" fill="none" stroke="#555" stroke-width="1.9"/></svg>
<div class="b" style="left:40px;top:60px;width:652px;height:20px;background:#f0f0f0;"></div>
<div class="b" style="left:0;top:60px;width:40px;height:20px;background:#e3ebf6;border-bottom:1px solid #9db6d8;border-right:1px solid #b3c8e2;box-sizing:border-box;"></div>
<div class="b" style="left:40px;top:79px;width:652px;height:0;border-top:1px dotted #c6c6c6;"></div>
<div class="t" style="left:43px;top:60.58px;font-size:14.5px;line-height:18px;color:#000;width:107.0px;overflow:hidden;transform:scaleX(0.897);transform-origin:0 0;">AppConPVT</div>
<div class="t" style="left:144.5px;top:60.58px;font-size:14.5px;line-height:18px;color:#000;width:318.8px;overflow:hidden;transform:scaleX(0.897);transform-origin:0 0;">Gestion PV</div>
<div class="t" style="left:537px;top:60.58px;font-size:14.5px;line-height:18px;color:#000;width:95.9px;overflow:hidden;transform:scaleX(0.897);transform-origin:0 0;">AppConPV</div>
<div class="t" style="left:689px;top:60.58px;font-size:14.5px;line-height:18px;color:#000;width:8.9px;overflow:hidden;transform:scaleX(0.897);transform-origin:0 0;">A</div>
<svg style="left:647px;top:61px" width="16" height="16"><rect x="1" y="1" width="14" height="14" fill="#fff" stroke="#454545" stroke-width="2"/><polyline points="3.4,7.6 6.6,10.8 13,4.4" fill="none" stroke="#555" stroke-width="1.9"/></svg>
<div class="b" style="left:40px;top:80px;width:652px;height:20px;background:#ffffff;"></div>
<div class="b" style="left:0;top:80px;width:40px;height:20px;background:#fdd58f;border-bottom:1px solid #9db6d8;border-right:1px solid #b3c8e2;box-sizing:border-box;"></div>
<div class="b" style="left:40px;top:99px;width:652px;height:0;border-top:1px dotted #c6c6c6;"></div>
<div class="t" style="left:43px;top:80.58px;font-size:14.5px;line-height:18px;color:#000;width:107.0px;overflow:hidden;transform:scaleX(0.897);transform-origin:0 0;">AppEIARBLT</div>
<div class="t" style="left:144.5px;top:80.58px;font-size:14.5px;line-height:18px;color:#000;width:318.8px;overflow:hidden;transform:scaleX(0.897);transform-origin:0 0;">BL / EDI</div>
<div class="t" style="left:537px;top:80.58px;font-size:14.5px;line-height:18px;color:#000;width:95.9px;overflow:hidden;transform:scaleX(0.897);transform-origin:0 0;">AppEIARBL</div>
<div class="t" style="left:689px;top:80.58px;font-size:14.5px;line-height:18px;color:#000;width:8.9px;overflow:hidden;transform:scaleX(0.897);transform-origin:0 0;">A</div>
<svg style="left:647px;top:81px" width="16" height="16"><rect x="1" y="1" width="14" height="14" fill="#fff" stroke="#454545" stroke-width="2"/><polyline points="3.4,7.6 6.6,10.8 13,4.4" fill="none" stroke="#555" stroke-width="1.9"/></svg>
<div class="b" style="left:40px;top:100px;width:652px;height:20px;background:#f0f0f0;"></div>
<div class="b" style="left:0;top:100px;width:40px;height:20px;background:#e3ebf6;border-bottom:1px solid #9db6d8;border-right:1px solid #b3c8e2;box-sizing:border-box;"></div>
<div class="b" style="left:40px;top:119px;width:652px;height:0;border-top:1px dotted #c6c6c6;"></div>
<div class="t" style="left:43px;top:100.58px;font-size:14.5px;line-height:18px;color:#000;width:107.0px;overflow:hidden;transform:scaleX(0.897);transform-origin:0 0;">AppPriALAF</div>
<div class="t" style="left:144.5px;top:100.58px;font-size:14.5px;line-height:18px;color:#000;width:318.8px;overflow:hidden;transform:scaleX(0.897);transform-origin:0 0;">Tarifs LAF</div>
<div class="t" style="left:537px;top:100.58px;font-size:14.5px;line-height:18px;color:#000;width:95.9px;overflow:hidden;transform:scaleX(0.897);transform-origin:0 0;">AppPriALA</div>
<svg style="left:647px;top:101px" width="16" height="16"><rect x="1" y="1" width="14" height="14" fill="#fff" stroke="#454545" stroke-width="2"/><polyline points="3.4,7.6 6.6,10.8 13,4.4" fill="none" stroke="#555" stroke-width="1.9"/></svg>
<div class="b" style="left:40px;top:120px;width:652px;height:20px;background:#ffffff;"></div>
<div class="b" style="left:0;top:120px;width:40px;height:20px;background:#e3ebf6;border-bottom:1px solid #9db6d8;border-right:1px solid #b3c8e2;box-sizing:border-box;"></div>
<div class="b" style="left:40px;top:139px;width:652px;height:0;border-top:1px dotted #c6c6c6;"></div>
<div class="t" style="left:43px;top:120.58px;font-size:14.5px;line-height:18px;color:#000;width:107.0px;overflow:hidden;transform:scaleX(0.897);transform-origin:0 0;">AppPriLAFT</div>
<div class="t" style="left:144.5px;top:120.58px;font-size:14.5px;line-height:18px;color:#000;width:318.8px;overflow:hidden;transform:scaleX(0.897);transform-origin:0 0;">Tarifs / LAF</div>
<div class="t" style="left:537px;top:120.58px;font-size:14.5px;line-height:18px;color:#000;width:95.9px;overflow:hidden;transform:scaleX(0.897);transform-origin:0 0;">AppPriLAF</div>
<div class="t" style="left:689px;top:120.58px;font-size:14.5px;line-height:18px;color:#000;width:8.9px;overflow:hidden;transform:scaleX(0.897);transform-origin:0 0;">A</div>
<svg style="left:647px;top:121px" width="16" height="16"><rect x="1" y="1" width="14" height="14" fill="#fff" stroke="#454545" stroke-width="2"/><polyline points="3.4,7.6 6.6,10.8 13,4.4" fill="none" stroke="#555" stroke-width="1.9"/></svg>
<div class="b" style="left:40px;top:140px;width:652px;height:20px;background:#f0f0f0;"></div>
<div class="b" style="left:0;top:140px;width:40px;height:20px;background:#e3ebf6;border-bottom:1px solid #9db6d8;border-right:1px solid #b3c8e2;box-sizing:border-box;"></div>
<div class="b" style="left:40px;top:159px;width:652px;height:0;border-top:1px dotted #c6c6c6;"></div>
<div class="t" style="left:43px;top:140.58px;font-size:14.5px;line-height:18px;color:#000;width:107.0px;overflow:hidden;transform:scaleX(0.897);transform-origin:0 0;">AppTDAOA</div>
<div class="t" style="left:144.5px;top:140.58px;font-size:14.5px;line-height:18px;color:#000;width:318.8px;overflow:hidden;transform:scaleX(0.897);transform-origin:0 0;">Passation</div>
<div class="t" style="left:537px;top:140.58px;font-size:14.5px;line-height:18px;color:#000;width:95.9px;overflow:hidden;transform:scaleX(0.897);transform-origin:0 0;">AppTDAOA</div>
<div class="t" style="left:689px;top:140.58px;font-size:14.5px;line-height:18px;color:#000;width:8.9px;overflow:hidden;transform:scaleX(0.897);transform-origin:0 0;">A</div>
<svg style="left:647px;top:141px" width="16" height="16"><rect x="1" y="1" width="14" height="14" fill="#fff" stroke="#454545" stroke-width="2"/><polyline points="3.4,7.6 6.6,10.8 13,4.4" fill="none" stroke="#555" stroke-width="1.9"/></svg>
<div class="b" style="left:40px;top:160px;width:652px;height:20px;background:#ffffff;"></div>
<div class="b" style="left:0;top:160px;width:40px;height:20px;background:#e3ebf6;border-bottom:1px solid #9db6d8;border-right:1px solid #b3c8e2;box-sizing:border-box;"></div>
<div class="b" style="left:40px;top:179px;width:652px;height:0;border-top:1px dotted #c6c6c6;"></div>
<div class="t" style="left:43px;top:160.58px;font-size:14.5px;line-height:18px;color:#000;width:107.0px;overflow:hidden;transform:scaleX(0.897);transform-origin:0 0;">AppUnMeT</div>
<div class="t" style="left:144.5px;top:160.58px;font-size:14.5px;line-height:18px;color:#000;width:318.8px;overflow:hidden;transform:scaleX(0.897);transform-origin:0 0;">Transcodage</div>
<div class="t" style="left:537px;top:160.58px;font-size:14.5px;line-height:18px;color:#000;width:95.9px;overflow:hidden;transform:scaleX(0.897);transform-origin:0 0;">AppUnMe</div>
<div class="t" style="left:689px;top:160.58px;font-size:14.5px;line-height:18px;color:#000;width:8.9px;overflow:hidden;transform:scaleX(0.897);transform-origin:0 0;">A</div>
<svg style="left:647px;top:161px" width="16" height="16"><rect x="1" y="1" width="14" height="14" fill="#fff" stroke="#454545" stroke-width="2"/><polyline points="3.4,7.6 6.6,10.8 13,4.4" fill="none" stroke="#555" stroke-width="1.9"/></svg>
<div class="b" style="left:40px;top:180px;width:652px;height:20px;background:#f0f0f0;"></div>
<div class="b" style="left:0;top:180px;width:40px;height:20px;background:#e3ebf6;border-bottom:1px solid #9db6d8;border-right:1px solid #b3c8e2;box-sizing:border-box;"></div>
<div class="b" style="left:40px;top:199px;width:652px;height:0;border-top:1px dotted #c6c6c6;"></div>
<div class="t" style="left:43px;top:180.58px;font-size:14.5px;line-height:18px;color:#000;width:107.0px;overflow:hidden;transform:scaleX(0.897);transform-origin:0 0;">CBNResTDy</div>
<div class="t" style="left:144.5px;top:180.58px;font-size:14.5px;line-height:18px;color:#000;width:318.8px;overflow:hidden;transform:scaleX(0.897);transform-origin:0 0;">Résultat CBN</div>
<div class="t" style="left:537px;top:180.58px;font-size:14.5px;line-height:18px;color:#000;width:95.9px;overflow:hidden;transform:scaleX(0.897);transform-origin:0 0;">CBNResTDy</div>
<svg style="left:647px;top:181px" width="16" height="16"><rect x="1" y="1" width="14" height="14" fill="#fff" stroke="#454545" stroke-width="2"/><polyline points="3.4,7.6 6.6,10.8 13,4.4" fill="none" stroke="#555" stroke-width="1.9"/></svg>
<div class="b" style="left:40px;top:200px;width:652px;height:20px;background:#ffffff;"></div>
<div class="b" style="left:0;top:200px;width:40px;height:20px;background:#e3ebf6;border-bottom:1px solid #9db6d8;border-right:1px solid #b3c8e2;box-sizing:border-box;"></div>
<div class="b" style="left:40px;top:219px;width:652px;height:0;border-top:1px dotted #c6c6c6;"></div>
<div class="t" style="left:43px;top:200.58px;font-size:14.5px;line-height:18px;color:#000;width:107.0px;overflow:hidden;transform:scaleX(0.897);transform-origin:0 0;">CBNResTra</div>
<div class="t" style="left:144.5px;top:200.58px;font-size:14.5px;line-height:18px;color:#000;width:318.8px;overflow:hidden;transform:scaleX(0.897);transform-origin:0 0;">Tracabilité</div>
<div class="t" style="left:537px;top:200.58px;font-size:14.5px;line-height:18px;color:#000;width:95.9px;overflow:hidden;transform:scaleX(0.897);transform-origin:0 0;">CBNResTra</div>
<svg style="left:647px;top:201px" width="16" height="16"><rect x="1" y="1" width="14" height="14" fill="#fff" stroke="#454545" stroke-width="2"/><polyline points="3.4,7.6 6.6,10.8 13,4.4" fill="none" stroke="#555" stroke-width="1.9"/></svg>
<div class="b" style="left:40px;top:220px;width:652px;height:20px;background:#f0f0f0;"></div>
<div class="b" style="left:0;top:220px;width:40px;height:20px;background:#e3ebf6;border-bottom:1px solid #9db6d8;border-right:1px solid #b3c8e2;box-sizing:border-box;"></div>
<div class="b" style="left:40px;top:239px;width:652px;height:0;border-top:1px dotted #c6c6c6;"></div>
<div class="t" style="left:43px;top:220.58px;font-size:14.5px;line-height:18px;color:#000;width:107.0px;overflow:hidden;transform:scaleX(0.897);transform-origin:0 0;">CdeChaPla</div>
<div class="t" style="left:144.5px;top:220.58px;font-size:14.5px;line-height:18px;color:#000;width:318.8px;overflow:hidden;transform:scaleX(0.897);transform-origin:0 0;">Détail Plan</div>
<div class="t" style="left:537px;top:220.58px;font-size:14.5px;line-height:18px;color:#000;width:95.9px;overflow:hidden;transform:scaleX(0.897);transform-origin:0 0;">CdeChaPla</div>
<div class="t" style="left:689px;top:220.58px;font-size:14.5px;line-height:18px;color:#000;width:8.9px;overflow:hidden;transform:scaleX(0.897);transform-origin:0 0;">I</div>
<svg style="left:647px;top:221px" width="16" height="16"><rect x="1" y="1" width="14" height="14" fill="#fff" stroke="#454545" stroke-width="2"/><polyline points="3.4,7.6 6.6,10.8 13,4.4" fill="none" stroke="#555" stroke-width="1.9"/></svg>
<div class="b" style="left:40px;top:240px;width:652px;height:20px;background:#ffffff;"></div>
<div class="b" style="left:0;top:240px;width:40px;height:20px;background:#e3ebf6;border-bottom:1px solid #9db6d8;border-right:1px solid #b3c8e2;box-sizing:border-box;"></div>
<div class="b" style="left:40px;top:259px;width:652px;height:0;border-top:1px dotted #c6c6c6;"></div>
<div class="t" style="left:43px;top:240.58px;font-size:14.5px;line-height:18px;color:#000;width:107.0px;overflow:hidden;transform:scaleX(0.897);transform-origin:0 0;">CdePosADeT</div>
<div class="t" style="left:144.5px;top:240.58px;font-size:14.5px;line-height:18px;color:#000;width:318.8px;overflow:hidden;transform:scaleX(0.897);transform-origin:0 0;">Gestion</div>
<div class="t" style="left:537px;top:240.58px;font-size:14.5px;line-height:18px;color:#000;width:95.9px;overflow:hidden;transform:scaleX(0.897);transform-origin:0 0;">CdePosADe</div>
<div class="t" style="left:689px;top:240.58px;font-size:14.5px;line-height:18px;color:#000;width:8.9px;overflow:hidden;transform:scaleX(0.897);transform-origin:0 0;">I</div>
<svg style="left:647px;top:241px" width="16" height="16"><rect x="1" y="1" width="14" height="14" fill="#fff" stroke="#454545" stroke-width="2"/><polyline points="3.4,7.6 6.6,10.8 13,4.4" fill="none" stroke="#555" stroke-width="1.9"/></svg>
<div class="b" style="left:40px;top:260px;width:652px;height:20px;background:#f0f0f0;"></div>
<div class="b" style="left:0;top:260px;width:40px;height:20px;background:#e3ebf6;border-bottom:1px solid #9db6d8;border-right:1px solid #b3c8e2;box-sizing:border-box;"></div>
<div class="b" style="left:40px;top:279px;width:652px;height:0;border-top:1px dotted #c6c6c6;"></div>
<div class="t" style="left:43px;top:260.58px;font-size:14.5px;line-height:18px;color:#000;width:107.0px;overflow:hidden;transform:scaleX(0.897);transform-origin:0 0;">CdePosDecT</div>
<div class="t" style="left:144.5px;top:260.58px;font-size:14.5px;line-height:18px;color:#000;width:318.8px;overflow:hidden;transform:scaleX(0.897);transform-origin:0 0;">Gestion</div>
<div class="t" style="left:537px;top:260.58px;font-size:14.5px;line-height:18px;color:#000;width:95.9px;overflow:hidden;transform:scaleX(0.897);transform-origin:0 0;">CdePosDec</div>
<div class="t" style="left:689px;top:260.58px;font-size:14.5px;line-height:18px;color:#000;width:8.9px;overflow:hidden;transform:scaleX(0.897);transform-origin:0 0;">I</div>
<svg style="left:647px;top:261px" width="16" height="16"><rect x="1" y="1" width="14" height="14" fill="#fff" stroke="#454545" stroke-width="2"/><polyline points="3.4,7.6 6.6,10.8 13,4.4" fill="none" stroke="#555" stroke-width="1.9"/></svg>
<div class="b" style="left:40px;top:280px;width:652px;height:20px;background:#ffffff;"></div>
<div class="b" style="left:0;top:280px;width:40px;height:20px;background:#e3ebf6;border-bottom:1px solid #9db6d8;border-right:1px solid #b3c8e2;box-sizing:border-box;"></div>
<div class="b" style="left:40px;top:299px;width:652px;height:0;border-top:1px dotted #c6c6c6;"></div>
<div class="t" style="left:43px;top:280.58px;font-size:14.5px;line-height:18px;color:#000;width:107.0px;overflow:hidden;transform:scaleX(0.897);transform-origin:0 0;">CdePosEquT</div>
<div class="t" style="left:144.5px;top:280.58px;font-size:14.5px;line-height:18px;color:#000;width:318.8px;overflow:hidden;transform:scaleX(0.897);transform-origin:0 0;">Equipe Poste</div>
<div class="t" style="left:537px;top:280.58px;font-size:14.5px;line-height:18px;color:#000;width:95.9px;overflow:hidden;transform:scaleX(0.897);transform-origin:0 0;">CdePosEqu</div>
<div class="t" style="left:689px;top:280.58px;font-size:14.5px;line-height:18px;color:#000;width:8.9px;overflow:hidden;transform:scaleX(0.897);transform-origin:0 0;">I</div>
<svg style="left:647px;top:281px" width="16" height="16"><rect x="1" y="1" width="14" height="14" fill="#fff" stroke="#454545" stroke-width="2"/><polyline points="3.4,7.6 6.6,10.8 13,4.4" fill="none" stroke="#555" stroke-width="1.9"/></svg>
<div class="b" style="left:40px;top:300px;width:652px;height:20px;background:#f0f0f0;"></div>
<div class="b" style="left:0;top:300px;width:40px;height:20px;background:#e3ebf6;border-bottom:1px solid #9db6d8;border-right:1px solid #b3c8e2;box-sizing:border-box;"></div>
<div class="b" style="left:40px;top:319px;width:652px;height:0;border-top:1px dotted #c6c6c6;"></div>
<div class="t" style="left:43px;top:300.58px;font-size:14.5px;line-height:18px;color:#000;width:107.0px;overflow:hidden;transform:scaleX(0.897);transform-origin:0 0;">CdePosEvtT</div>
<div class="t" style="left:144.5px;top:300.58px;font-size:14.5px;line-height:18px;color:#000;width:318.8px;overflow:hidden;transform:scaleX(0.897);transform-origin:0 0;">Evenements</div>
<div class="t" style="left:537px;top:300.58px;font-size:14.5px;line-height:18px;color:#000;width:95.9px;overflow:hidden;transform:scaleX(0.897);transform-origin:0 0;">CdePosEvt</div>
<div class="t" style="left:689px;top:300.58px;font-size:14.5px;line-height:18px;color:#000;width:8.9px;overflow:hidden;transform:scaleX(0.897);transform-origin:0 0;">I</div>
<svg style="left:647px;top:301px" width="16" height="16"><rect x="1" y="1" width="14" height="14" fill="#fff" stroke="#454545" stroke-width="2"/><polyline points="3.4,7.6 6.6,10.8 13,4.4" fill="none" stroke="#555" stroke-width="1.9"/></svg>
<div class="b" style="left:40px;top:320px;width:652px;height:20px;background:#ffffff;"></div>
<div class="b" style="left:0;top:320px;width:40px;height:20px;background:#e3ebf6;border-bottom:1px solid #9db6d8;border-right:1px solid #b3c8e2;box-sizing:border-box;"></div>
<div class="b" style="left:40px;top:339px;width:652px;height:0;border-top:1px dotted #c6c6c6;"></div>
<div class="t" style="left:43px;top:320.58px;font-size:14.5px;line-height:18px;color:#000;width:107.0px;overflow:hidden;transform:scaleX(0.897);transform-origin:0 0;">CdePosHEvT</div>
<div class="t" style="left:144.5px;top:320.58px;font-size:14.5px;line-height:18px;color:#000;width:318.8px;overflow:hidden;transform:scaleX(0.897);transform-origin:0 0;">Historique</div>
<div class="t" style="left:537px;top:320.58px;font-size:14.5px;line-height:18px;color:#000;width:95.9px;overflow:hidden;transform:scaleX(0.897);transform-origin:0 0;">CdePosHEv</div>
<div class="t" style="left:689px;top:320.58px;font-size:14.5px;line-height:18px;color:#000;width:8.9px;overflow:hidden;transform:scaleX(0.897);transform-origin:0 0;">I</div>
<svg style="left:647px;top:321px" width="16" height="16"><rect x="1" y="1" width="14" height="14" fill="#fff" stroke="#454545" stroke-width="2"/><polyline points="3.4,7.6 6.6,10.8 13,4.4" fill="none" stroke="#555" stroke-width="1.9"/></svg>
<div class="b" style="left:40px;top:340px;width:652px;height:20px;background:#f0f0f0;"></div>
<div class="b" style="left:0;top:340px;width:40px;height:20px;background:#e3ebf6;border-bottom:1px solid #9db6d8;border-right:1px solid #b3c8e2;box-sizing:border-box;"></div>
<div class="b" style="left:40px;top:359px;width:652px;height:0;border-top:1px dotted #c6c6c6;"></div>
<div class="t" style="left:43px;top:340.58px;font-size:14.5px;line-height:18px;color:#000;width:107.0px;overflow:hidden;transform:scaleX(0.897);transform-origin:0 0;">CdePosParT</div>
<div class="t" style="left:144.5px;top:340.58px;font-size:14.5px;line-height:18px;color:#000;width:318.8px;overflow:hidden;transform:scaleX(0.897);transform-origin:0 0;">Repartition</div>
<div class="t" style="left:537px;top:340.58px;font-size:14.5px;line-height:18px;color:#000;width:95.9px;overflow:hidden;transform:scaleX(0.897);transform-origin:0 0;">CdePosParT</div>
<div class="t" style="left:689px;top:340.58px;font-size:14.5px;line-height:18px;color:#000;width:8.9px;overflow:hidden;transform:scaleX(0.897);transform-origin:0 0;">I</div>
<svg style="left:647px;top:341px" width="16" height="16"><rect x="1" y="1" width="14" height="14" fill="#fff" stroke="#454545" stroke-width="2"/><polyline points="3.4,7.6 6.6,10.8 13,4.4" fill="none" stroke="#555" stroke-width="1.9"/></svg>
<div class="b" style="left:40px;top:360px;width:652px;height:20px;background:#ffffff;"></div>
<div class="b" style="left:0;top:360px;width:40px;height:20px;background:#e3ebf6;border-bottom:1px solid #9db6d8;border-right:1px solid #b3c8e2;box-sizing:border-box;"></div>
<div class="b" style="left:40px;top:379px;width:652px;height:0;border-top:1px dotted #c6c6c6;"></div>
<div class="t" style="left:43px;top:360.58px;font-size:14.5px;line-height:18px;color:#000;width:107.0px;overflow:hidden;transform:scaleX(0.897);transform-origin:0 0;">CdePosRecT</div>
<div class="t" style="left:144.5px;top:360.58px;font-size:14.5px;line-height:18px;color:#000;width:318.8px;overflow:hidden;transform:scaleX(0.897);transform-origin:0 0;">Gestion</div>
<div class="t" style="left:537px;top:360.58px;font-size:14.5px;line-height:18px;color:#000;width:95.9px;overflow:hidden;transform:scaleX(0.897);transform-origin:0 0;">CdePosRec</div>
<div class="t" style="left:689px;top:360.58px;font-size:14.5px;line-height:18px;color:#000;width:8.9px;overflow:hidden;transform:scaleX(0.897);transform-origin:0 0;">I</div>
<svg style="left:647px;top:361px" width="16" height="16"><rect x="1" y="1" width="14" height="14" fill="#fff" stroke="#454545" stroke-width="2"/><polyline points="3.4,7.6 6.6,10.8 13,4.4" fill="none" stroke="#555" stroke-width="1.9"/></svg>
<div class="b" style="left:40px;top:380px;width:652px;height:20px;background:#f0f0f0;"></div>
<div class="b" style="left:0;top:380px;width:40px;height:20px;background:#e3ebf6;border-bottom:1px solid #9db6d8;border-right:1px solid #b3c8e2;box-sizing:border-box;"></div>
<div class="b" style="left:40px;top:399px;width:652px;height:0;border-top:1px dotted #c6c6c6;"></div>
<div class="t" style="left:43px;top:380.58px;font-size:14.5px;line-height:18px;color:#000;width:107.0px;overflow:hidden;transform:scaleX(0.897);transform-origin:0 0;">CdePosTpsT</div>
<div class="t" style="left:144.5px;top:380.58px;font-size:14.5px;line-height:18px;color:#000;width:318.8px;overflow:hidden;transform:scaleX(0.897);transform-origin:0 0;">Temps Dec</div>
<div class="t" style="left:537px;top:380.58px;font-size:14.5px;line-height:18px;color:#000;width:95.9px;overflow:hidden;transform:scaleX(0.897);transform-origin:0 0;">CdePosTps</div>
<div class="t" style="left:689px;top:380.58px;font-size:14.5px;line-height:18px;color:#000;width:8.9px;overflow:hidden;transform:scaleX(0.897);transform-origin:0 0;">I</div>
<svg style="left:647px;top:381px" width="16" height="16"><rect x="1" y="1" width="14" height="14" fill="#fff" stroke="#454545" stroke-width="2"/><polyline points="3.4,7.6 6.6,10.8 13,4.4" fill="none" stroke="#555" stroke-width="1.9"/></svg>
<div class="b" style="left:40px;top:400px;width:652px;height:20px;background:#ffffff;"></div>
<div class="b" style="left:0;top:400px;width:40px;height:20px;background:#e3ebf6;border-bottom:1px solid #9db6d8;border-right:1px solid #b3c8e2;box-sizing:border-box;"></div>
<div class="b" style="left:40px;top:419px;width:652px;height:0;border-top:1px dotted #c6c6c6;"></div>
<div class="t" style="left:43px;top:400.58px;font-size:14.5px;line-height:18px;color:#000;width:107.0px;overflow:hidden;transform:scaleX(0.897);transform-origin:0 0;">CDExUEHis</div>
<div class="t" style="left:144.5px;top:400.58px;font-size:14.5px;line-height:18px;color:#000;width:318.8px;overflow:hidden;transform:scaleX(0.897);transform-origin:0 0;">Historique</div>
<div class="t" style="left:537px;top:400.58px;font-size:14.5px;line-height:18px;color:#000;width:95.9px;overflow:hidden;transform:scaleX(0.897);transform-origin:0 0;">CDExUEHis</div>
<div class="t" style="left:689px;top:400.58px;font-size:14.5px;line-height:18px;color:#000;width:8.9px;overflow:hidden;transform:scaleX(0.897);transform-origin:0 0;">I</div>
<svg style="left:647px;top:401px" width="16" height="16"><rect x="1" y="1" width="14" height="14" fill="#fff" stroke="#454545" stroke-width="2"/><polyline points="3.4,7.6 6.6,10.8 13,4.4" fill="none" stroke="#555" stroke-width="1.9"/></svg>
<div class="b" style="left:40px;top:420px;width:652px;height:20px;background:#f0f0f0;"></div>
<div class="b" style="left:0;top:420px;width:40px;height:20px;background:#e3ebf6;border-bottom:1px solid #9db6d8;border-right:1px solid #b3c8e2;box-sizing:border-box;"></div>
<div class="b" style="left:40px;top:439px;width:652px;height:0;border-top:1px dotted #c6c6c6;"></div>
<div class="t" style="left:43px;top:420.58px;font-size:14.5px;line-height:18px;color:#000;width:107.0px;overflow:hidden;transform:scaleX(0.897);transform-origin:0 0;">CfgModLig</div>
<div class="t" style="left:144.5px;top:420.58px;font-size:14.5px;line-height:18px;color:#000;width:318.8px;overflow:hidden;transform:scaleX(0.897);transform-origin:0 0;">Modification</div>
<div class="t" style="left:537px;top:420.58px;font-size:14.5px;line-height:18px;color:#000;width:95.9px;overflow:hidden;transform:scaleX(0.897);transform-origin:0 0;">CfgModLig</div>
<div class="t" style="left:689px;top:420.58px;font-size:14.5px;line-height:18px;color:#000;width:8.9px;overflow:hidden;transform:scaleX(0.897);transform-origin:0 0;">I</div>
<svg style="left:647px;top:421px" width="16" height="16"><rect x="1" y="1" width="14" height="14" fill="#fff" stroke="#454545" stroke-width="2"/><polyline points="3.4,7.6 6.6,10.8 13,4.4" fill="none" stroke="#555" stroke-width="1.9"/></svg>
<div class="b" style="left:40px;top:440px;width:652px;height:20px;background:#ffffff;"></div>
<div class="b" style="left:0;top:440px;width:40px;height:20px;background:#e3ebf6;border-bottom:1px solid #9db6d8;border-right:1px solid #b3c8e2;box-sizing:border-box;"></div>
<div class="b" style="left:40px;top:459px;width:652px;height:0;border-top:1px dotted #c6c6c6;"></div>
<div class="t" style="left:43px;top:440.58px;font-size:14.5px;line-height:18px;color:#000;width:107.0px;overflow:hidden;transform:scaleX(0.897);transform-origin:0 0;">CliRemMaj</div>
<div class="t" style="left:144.5px;top:440.58px;font-size:14.5px;line-height:18px;color:#000;width:318.8px;overflow:hidden;transform:scaleX(0.897);transform-origin:0 0;">Maintenance</div>
<div class="t" style="left:537px;top:440.58px;font-size:14.5px;line-height:18px;color:#000;width:95.9px;overflow:hidden;transform:scaleX(0.897);transform-origin:0 0;">CliRemMaj</div>
<div class="t" style="left:689px;top:440.58px;font-size:14.5px;line-height:18px;color:#000;width:8.9px;overflow:hidden;transform:scaleX(0.897);transform-origin:0 0;">I</div>
<svg style="left:647px;top:441px" width="16" height="16"><rect x="1" y="1" width="14" height="14" fill="#fff" stroke="#454545" stroke-width="2"/><polyline points="3.4,7.6 6.6,10.8 13,4.4" fill="none" stroke="#555" stroke-width="1.9"/></svg>
<div class="b" style="left:40px;top:460px;width:652px;height:20px;background:#f0f0f0;"></div>
<div class="b" style="left:0;top:460px;width:40px;height:20px;background:#e3ebf6;border-bottom:1px solid #9db6d8;border-right:1px solid #b3c8e2;box-sizing:border-box;"></div>
<div class="b" style="left:40px;top:479px;width:652px;height:0;border-top:1px dotted #c6c6c6;"></div>
<div class="t" style="left:43px;top:460.58px;font-size:14.5px;line-height:18px;color:#000;width:107.0px;overflow:hidden;transform:scaleX(0.897);transform-origin:0 0;">ColDetArtT</div>
<div class="t" style="left:144.5px;top:460.58px;font-size:14.5px;line-height:18px;color:#000;width:318.8px;overflow:hidden;transform:scaleX(0.897);transform-origin:0 0;">Visu détail</div>
<div class="t" style="left:537px;top:460.58px;font-size:14.5px;line-height:18px;color:#000;width:95.9px;overflow:hidden;transform:scaleX(0.897);transform-origin:0 0;">ColDetArt</div>
<div class="t" style="left:689px;top:460.58px;font-size:14.5px;line-height:18px;color:#000;width:8.9px;overflow:hidden;transform:scaleX(0.897);transform-origin:0 0;">I</div>
<svg style="left:647px;top:461px" width="16" height="16"><rect x="1" y="1" width="14" height="14" fill="#fff" stroke="#454545" stroke-width="2"/><polyline points="3.4,7.6 6.6,10.8 13,4.4" fill="none" stroke="#555" stroke-width="1.9"/></svg>
<div class="b" style="left:40px;top:480px;width:652px;height:20px;background:#ffffff;"></div>
<div class="b" style="left:0;top:480px;width:40px;height:20px;background:#e3ebf6;border-bottom:1px solid #9db6d8;border-right:1px solid #b3c8e2;box-sizing:border-box;"></div>
<div class="b" style="left:40px;top:499px;width:652px;height:0;border-top:1px dotted #c6c6c6;"></div>
<div class="t" style="left:43px;top:480.58px;font-size:14.5px;line-height:18px;color:#000;width:107.0px;overflow:hidden;transform:scaleX(0.897);transform-origin:0 0;">ColDetEntT</div>
<div class="t" style="left:144.5px;top:480.58px;font-size:14.5px;line-height:18px;color:#000;width:318.8px;overflow:hidden;transform:scaleX(0.897);transform-origin:0 0;">Visu détail</div>
<div class="t" style="left:537px;top:480.58px;font-size:14.5px;line-height:18px;color:#000;width:95.9px;overflow:hidden;transform:scaleX(0.897);transform-origin:0 0;">ColDetEnt</div>
<div class="t" style="left:689px;top:480.58px;font-size:14.5px;line-height:18px;color:#000;width:8.9px;overflow:hidden;transform:scaleX(0.897);transform-origin:0 0;">I</div>
<svg style="left:647px;top:481px" width="16" height="16"><rect x="1" y="1" width="14" height="14" fill="#fff" stroke="#454545" stroke-width="2"/><polyline points="3.4,7.6 6.6,10.8 13,4.4" fill="none" stroke="#555" stroke-width="1.9"/></svg>
<div class="b" style="left:40px;top:500px;width:652px;height:20px;background:#f0f0f0;"></div>
<div class="b" style="left:0;top:500px;width:40px;height:20px;background:#e3ebf6;border-bottom:1px solid #9db6d8;border-right:1px solid #b3c8e2;box-sizing:border-box;"></div>
<div class="b" style="left:40px;top:519px;width:652px;height:0;border-top:1px dotted #c6c6c6;"></div>
<div class="t" style="left:43px;top:500.58px;font-size:14.5px;line-height:18px;color:#000;width:107.0px;overflow:hidden;transform:scaleX(0.897);transform-origin:0 0;">ColDetLigT</div>
<div class="t" style="left:144.5px;top:500.58px;font-size:14.5px;line-height:18px;color:#000;width:318.8px;overflow:hidden;transform:scaleX(0.897);transform-origin:0 0;">Visu détail</div>
<div class="t" style="left:537px;top:500.58px;font-size:14.5px;line-height:18px;color:#000;width:95.9px;overflow:hidden;transform:scaleX(0.897);transform-origin:0 0;">ColDetLig</div>
<div class="t" style="left:689px;top:500.58px;font-size:14.5px;line-height:18px;color:#000;width:8.9px;overflow:hidden;transform:scaleX(0.897);transform-origin:0 0;">I</div>
<svg style="left:647px;top:501px" width="16" height="16"><rect x="1" y="1" width="14" height="14" fill="#fff" stroke="#454545" stroke-width="2"/><polyline points="3.4,7.6 6.6,10.8 13,4.4" fill="none" stroke="#555" stroke-width="1.9"/></svg>
<div class="b" style="left:40px;top:520px;width:652px;height:20px;background:#ffffff;"></div>
<div class="b" style="left:0;top:520px;width:40px;height:20px;background:#e3ebf6;border-bottom:1px solid #9db6d8;border-right:1px solid #b3c8e2;box-sizing:border-box;"></div>
<div class="b" style="left:40px;top:539px;width:652px;height:0;border-top:1px dotted #c6c6c6;"></div>
<div class="t" style="left:43px;top:520.58px;font-size:14.5px;line-height:18px;color:#000;width:107.0px;overflow:hidden;transform:scaleX(0.897);transform-origin:0 0;">ColPrepa</div>
<div class="t" style="left:144.5px;top:520.58px;font-size:14.5px;line-height:18px;color:#000;width:318.8px;overflow:hidden;transform:scaleX(0.897);transform-origin:0 0;">Préparation</div>
<div class="t" style="left:537px;top:520.58px;font-size:14.5px;line-height:18px;color:#000;width:95.9px;overflow:hidden;transform:scaleX(0.897);transform-origin:0 0;">ColPrepa</div>
<div class="t" style="left:689px;top:520.58px;font-size:14.5px;line-height:18px;color:#000;width:8.9px;overflow:hidden;transform:scaleX(0.897);transform-origin:0 0;">I</div>
<svg style="left:647px;top:521px" width="16" height="16"><rect x="1" y="1" width="14" height="14" fill="#fff" stroke="#454545" stroke-width="2"/><polyline points="3.4,7.6 6.6,10.8 13,4.4" fill="none" stroke="#555" stroke-width="1.9"/></svg>
<div class="b" style="left:40px;top:540px;width:652px;height:20px;background:#f0f0f0;"></div>
<div class="b" style="left:0;top:540px;width:40px;height:20px;background:#e3ebf6;border-bottom:1px solid #9db6d8;border-right:1px solid #b3c8e2;box-sizing:border-box;"></div>
<div class="b" style="left:40px;top:559px;width:652px;height:0;border-top:1px dotted #c6c6c6;"></div>
<div class="t" style="left:43px;top:540.58px;font-size:14.5px;line-height:18px;color:#000;width:107.0px;overflow:hidden;transform:scaleX(0.897);transform-origin:0 0;">CtgCodDecT</div>
<div class="t" style="left:144.5px;top:540.58px;font-size:14.5px;line-height:18px;color:#000;width:318.8px;overflow:hidden;transform:scaleX(0.897);transform-origin:0 0;">Maintenance</div>
<div class="t" style="left:537px;top:540.58px;font-size:14.5px;line-height:18px;color:#000;width:95.9px;overflow:hidden;transform:scaleX(0.897);transform-origin:0 0;">CtgCodDec</div>
<div class="t" style="left:689px;top:540.58px;font-size:14.5px;line-height:18px;color:#000;width:8.9px;overflow:hidden;transform:scaleX(0.897);transform-origin:0 0;">I</div>
<svg style="left:647px;top:541px" width="16" height="16"><rect x="1" y="1" width="14" height="14" fill="#fff" stroke="#454545" stroke-width="2"/><polyline points="3.4,7.6 6.6,10.8 13,4.4" fill="none" stroke="#555" stroke-width="1.9"/></svg>
<div class="b" style="left:40px;top:560px;width:652px;height:20px;background:#ffffff;"></div>
<div class="b" style="left:0;top:560px;width:40px;height:20px;background:#e3ebf6;border-bottom:1px solid #9db6d8;border-right:1px solid #b3c8e2;box-sizing:border-box;"></div>
<div class="b" style="left:40px;top:579px;width:652px;height:0;border-top:1px dotted #c6c6c6;"></div>
<div class="t" style="left:43px;top:560.58px;font-size:14.5px;line-height:18px;color:#000;width:107.0px;overflow:hidden;transform:scaleX(0.897);transform-origin:0 0;">CtgCtrCoDT</div>
<div class="t" style="left:144.5px;top:560.58px;font-size:14.5px;line-height:18px;color:#000;width:318.8px;overflow:hidden;transform:scaleX(0.897);transform-origin:0 0;">Contrainte</div>
<div class="t" style="left:537px;top:560.58px;font-size:14.5px;line-height:18px;color:#000;width:95.9px;overflow:hidden;transform:scaleX(0.897);transform-origin:0 0;">CtgCtrCoD</div>
<div class="t" style="left:689px;top:560.58px;font-size:14.5px;line-height:18px;color:#000;width:8.9px;overflow:hidden;transform:scaleX(0.897);transform-origin:0 0;">I</div>
<svg style="left:647px;top:561px" width="16" height="16"><rect x="1" y="1" width="14" height="14" fill="#fff" stroke="#454545" stroke-width="2"/><polyline points="3.4,7.6 6.6,10.8 13,4.4" fill="none" stroke="#555" stroke-width="1.9"/></svg>
<div class="b" style="left:40px;top:580px;width:652px;height:20px;background:#f0f0f0;"></div>
<div class="b" style="left:0;top:580px;width:40px;height:20px;background:#e3ebf6;border-bottom:1px solid #9db6d8;border-right:1px solid #b3c8e2;box-sizing:border-box;"></div>
<div class="b" style="left:40px;top:599px;width:652px;height:0;border-top:1px dotted #c6c6c6;"></div>
<div class="t" style="left:43px;top:580.58px;font-size:14.5px;line-height:18px;color:#000;width:107.0px;overflow:hidden;transform:scaleX(0.897);transform-origin:0 0;">CtgDecAff</div>
<div class="t" style="left:144.5px;top:580.58px;font-size:14.5px;line-height:18px;color:#000;width:318.8px;overflow:hidden;transform:scaleX(0.897);transform-origin:0 0;">Déclaration</div>
<div class="t" style="left:537px;top:580.58px;font-size:14.5px;line-height:18px;color:#000;width:95.9px;overflow:hidden;transform:scaleX(0.897);transform-origin:0 0;">CtgDecAff</div>
<div class="t" style="left:689px;top:580.58px;font-size:14.5px;line-height:18px;color:#000;width:8.9px;overflow:hidden;transform:scaleX(0.897);transform-origin:0 0;">I</div>
<svg style="left:647px;top:581px" width="16" height="16"><rect x="1" y="1" width="14" height="14" fill="#fff" stroke="#454545" stroke-width="2"/><polyline points="3.4,7.6 6.6,10.8 13,4.4" fill="none" stroke="#555" stroke-width="1.9"/></svg>
<div class="b" style="left:40px;top:600px;width:652px;height:20px;background:#ffffff;"></div>
<div class="b" style="left:0;top:600px;width:40px;height:20px;background:#e3ebf6;border-bottom:1px solid #9db6d8;border-right:1px solid #b3c8e2;box-sizing:border-box;"></div>
<div class="b" style="left:40px;top:619px;width:652px;height:0;border-top:1px dotted #c6c6c6;"></div>
<div class="t" style="left:43px;top:600.58px;font-size:14.5px;line-height:18px;color:#000;width:107.0px;overflow:hidden;transform:scaleX(0.897);transform-origin:0 0;">CtgDecAffR</div>
<div class="t" style="left:144.5px;top:600.58px;font-size:14.5px;line-height:18px;color:#000;width:318.8px;overflow:hidden;transform:scaleX(0.897);transform-origin:0 0;">Cumul Heures</div>
<div class="t" style="left:537px;top:600.58px;font-size:14.5px;line-height:18px;color:#000;width:95.9px;overflow:hidden;transform:scaleX(0.897);transform-origin:0 0;">CtgDecAffR</div>
<div class="t" style="left:689px;top:600.58px;font-size:14.5px;line-height:18px;color:#000;width:8.9px;overflow:hidden;transform:scaleX(0.897);transform-origin:0 0;">I</div>
<svg style="left:647px;top:601px" width="16" height="16"><rect x="1" y="1" width="14" height="14" fill="#fff" stroke="#454545" stroke-width="2"/><polyline points="3.4,7.6 6.6,10.8 13,4.4" fill="none" stroke="#555" stroke-width="1.9"/></svg>
<div class="b" style="left:40px;top:620px;width:652px;height:20px;background:#f0f0f0;"></div>
<div class="b" style="left:0;top:620px;width:40px;height:20px;background:#e3ebf6;border-bottom:1px solid #9db6d8;border-right:1px solid #b3c8e2;box-sizing:border-box;"></div>
<div class="b" style="left:40px;top:639px;width:652px;height:0;border-top:1px dotted #c6c6c6;"></div>
<div class="t" style="left:43px;top:620.58px;font-size:14.5px;line-height:18px;color:#000;width:107.0px;overflow:hidden;transform:scaleX(0.897);transform-origin:0 0;">CtgDecUti</div>
<div class="t" style="left:144.5px;top:620.58px;font-size:14.5px;line-height:18px;color:#000;width:318.8px;overflow:hidden;transform:scaleX(0.897);transform-origin:0 0;">Déclaration</div>
<div class="t" style="left:537px;top:620.58px;font-size:14.5px;line-height:18px;color:#000;width:95.9px;overflow:hidden;transform:scaleX(0.897);transform-origin:0 0;">CtgDecUti</div>
<div class="t" style="left:689px;top:620.58px;font-size:14.5px;line-height:18px;color:#000;width:8.9px;overflow:hidden;transform:scaleX(0.897);transform-origin:0 0;">I</div>
<svg style="left:647px;top:621px" width="16" height="16"><rect x="1" y="1" width="14" height="14" fill="#fff" stroke="#454545" stroke-width="2"/><polyline points="3.4,7.6 6.6,10.8 13,4.4" fill="none" stroke="#555" stroke-width="1.9"/></svg>
<div class="b" style="left:40px;top:640px;width:652px;height:20px;background:#ffffff;"></div>
<div class="b" style="left:0;top:640px;width:40px;height:20px;background:#e3ebf6;border-bottom:1px solid #9db6d8;border-right:1px solid #b3c8e2;box-sizing:border-box;"></div>
<div class="b" style="left:40px;top:659px;width:652px;height:0;border-top:1px dotted #c6c6c6;"></div>
<div class="t" style="left:43px;top:640.58px;font-size:14.5px;line-height:18px;color:#000;width:107.0px;overflow:hidden;transform:scaleX(0.897);transform-origin:0 0;">CtgLEDAnaT</div>
<div class="t" style="left:144.5px;top:640.58px;font-size:14.5px;line-height:18px;color:#000;width:318.8px;overflow:hidden;transform:scaleX(0.897);transform-origin:0 0;">Liens Entre</div>
<div class="t" style="left:537px;top:640.58px;font-size:14.5px;line-height:18px;color:#000;width:95.9px;overflow:hidden;transform:scaleX(0.897);transform-origin:0 0;">CtgLEDAna</div>
<div class="t" style="left:689px;top:640.58px;font-size:14.5px;line-height:18px;color:#000;width:8.9px;overflow:hidden;transform:scaleX(0.897);transform-origin:0 0;">I</div>
<svg style="left:647px;top:641px" width="16" height="16"><rect x="1" y="1" width="14" height="14" fill="#fff" stroke="#454545" stroke-width="2"/><polyline points="3.4,7.6 6.6,10.8 13,4.4" fill="none" stroke="#555" stroke-width="1.9"/></svg>
<div class="b" style="left:40px;top:660px;width:652px;height:20px;background:#f0f0f0;"></div>
<div class="b" style="left:0;top:660px;width:40px;height:20px;background:#e3ebf6;border-bottom:1px solid #9db6d8;border-right:1px solid #b3c8e2;box-sizing:border-box;"></div>
<div class="b" style="left:40px;top:679px;width:652px;height:0;border-top:1px dotted #c6c6c6;"></div>
<div class="t" style="left:43px;top:660.58px;font-size:14.5px;line-height:18px;color:#000;width:107.0px;overflow:hidden;transform:scaleX(0.897);transform-origin:0 0;">CtgModTos</div>
<div class="t" style="left:144.5px;top:660.58px;font-size:14.5px;line-height:18px;color:#000;width:318.8px;overflow:hidden;transform:scaleX(0.897);transform-origin:0 0;">Gestion</div>
<div class="t" style="left:537px;top:660.58px;font-size:14.5px;line-height:18px;color:#000;width:95.9px;overflow:hidden;transform:scaleX(0.897);transform-origin:0 0;">CtgModTos</div>
<div class="t" style="left:689px;top:660.58px;font-size:14.5px;line-height:18px;color:#000;width:8.9px;overflow:hidden;transform:scaleX(0.897);transform-origin:0 0;">I</div>
<svg style="left:647px;top:661px" width="16" height="16"><rect x="1" y="1" width="14" height="14" fill="#fff" stroke="#454545" stroke-width="2"/><polyline points="3.4,7.6 6.6,10.8 13,4.4" fill="none" stroke="#555" stroke-width="1.9"/></svg>
<div class="b" style="left:141px;top:0;width:0;height:670px;border-left:1px dotted #c6c6c6;"></div>
<div class="b" style="left:433px;top:0;width:0;height:670px;border-left:1px dotted #c6c6c6;"></div>
<div class="b" style="left:533px;top:0;width:0;height:670px;border-left:1px dotted #c6c6c6;"></div>
<div class="b" style="left:626px;top:0;width:0;height:670px;border-left:1px dotted #c6c6c6;"></div>
<div class="b" style="left:686px;top:0;width:0;height:670px;border-left:1px dotted #c6c6c6;"></div>
</div>
<div class="b" style="left:497px;top:189px;width:39px;height:1px;background:#f3a14a;"></div>
<div class="b" style="left:537px;top:110px;width:1px;height:20px;background:#f3a14a;"></div>
<div class="b" style="left:636px;top:188px;width:62px;height:23px;border:3px solid #000;box-sizing:border-box;"></div>
<div class="b" style="left:1189px;top:87px;width:20px;height:692px;background:#7196c1;border-left:1px solid #5b76a3;box-sizing:border-box;"></div>
<div class="b" style="left:1189px;top:87px;width:20px;height:20px;background:linear-gradient(90deg,#dbe8f8 50%,#c4d9f2 50%);border:1px solid #5d74a0;box-sizing:border-box;"></div>
<svg style="left:1189px;top:88px" width="20" height="18"><path d="M4.9,11.6 L10.4,5.8 L16.1,11.6 Z" fill="#3a4563"/></svg>
<div class="b" style="left:1189px;top:106px;width:20px;height:91px;background:linear-gradient(90deg,#dbe8f8 50%,#c4d9f2 50%);border:1px solid #5d74a0;box-sizing:border-box;"></div>
<div class="b" style="left:1189px;top:760px;width:20px;height:19px;background:linear-gradient(90deg,#dbe8f8 50%,#c4d9f2 50%);border:1px solid #5d74a0;box-sizing:border-box;"></div>
<svg style="left:1189px;top:760px" width="20" height="19"><path d="M4.9,6.4 L10.4,12.2 L16.1,6.4 Z" fill="#3a4563"/></svg>
<div class="b" style="left:497px;top:779px;width:692px;height:20px;background:#7196c1;border-top:1px solid #5b76a3;box-sizing:border-box;"></div>
<div class="b" style="left:497px;top:779px;width:200px;height:20px;background:linear-gradient(#dbe8f8 50%,#c4d9f2 50%);border:1px solid #5d74a0;box-sizing:border-box;"></div>
<div class="b" style="left:497px;top:779px;width:19px;height:20px;background:linear-gradient(#dbe8f8 50%,#c4d9f2 50%);border:1px solid #5d74a0;box-sizing:border-box;"></div>
<svg style="left:497px;top:779px" width="19" height="20"><path d="M12,4.4 L5.7,10.2 L12,16 Z" fill="#3a4563"/></svg>
<div class="b" style="left:1170px;top:779px;width:19px;height:20px;background:linear-gradient(#dbe8f8 50%,#c4d9f2 50%);border:1px solid #5d74a0;box-sizing:border-box;"></div>
<svg style="left:1170px;top:779px" width="19" height="20"><path d="M7,4.4 L13.3,10.2 L7,16 Z" fill="#3a4563"/></svg>
<div class="b" style="left:1189px;top:779px;width:20px;height:20px;background:#8eaad0;"></div>
<div class="b" style="left:503px;top:808px;width:82px;height:24px;background:#e1e1e1;border:1px solid #adadad;box-sizing:border-box;"></div>
<svg style="left:513px;top:812px" width="17" height="17"><g stroke="#ea5426" stroke-width="3" stroke-linecap="round"><line x1="2.6" y1="2.6" x2="14.2" y2="14.2"/><line x1="14.2" y1="2.6" x2="2.6" y2="14.2"/></g></svg>
<div class="t" style="left:535.5px;top:810.48px;font-size:14.5px;line-height:19px;color:#111;transform:scaleX(0.897);transform-origin:0 0;">Fermer</div>
<div class="b" style="left:1210px;top:85px;width:2px;height:750px;background:#e6e6e6;"></div>
<div class="b" style="left:1212px;top:85px;width:4px;height:750px;background:#9b9b9b;"></div>
<div class="b" style="left:1216px;top:85px;width:123px;height:750px;background:#f0f0f0;"></div>
<svg style="left:1216px;top:88px" width="123" height="714"><path d="M2.5,713.5 L2.5,26.5 L9,26.5 L23.5,2.5 L123,2.5" fill="none" stroke="#8e8e8e" stroke-width="1"/><path d="M2.5,711.5 L123,711.5" stroke="#a0a0a0"/></svg>
<svg style="left:1239.5px;top:92.5px" width="16" height="19" viewBox="0 0 16 19"><path d="M6,1 L12,1 L15,4 L15,15 L6,15 Z" fill="#efe8de" stroke="#c9c2b8" stroke-width="0.8"/><path d="M12,1 L12,4 L15,4" fill="none" stroke="#8a8580" stroke-width="0.9"/><path d="M1,4 L8,4 L10.5,6.5 L10.5,18 L1,18 Z" fill="#f7f1e9" stroke="#c9c2b8" stroke-width="0.8"/><path d="M8,4 L8,6.5 L10.5,6.5" fill="none" stroke="#8a8580" stroke-width="0.9"/></svg>
<div class="t" style="left:1261px;top:93.48px;font-size:14.5px;line-height:19px;color:#000;font-weight:bold;text-shadow:0 0 0.6px #6a4a20;">Généralités</div>
<div class="t" style="right:12px;top:121.88px;font-size:14.5px;line-height:19px;color:#111;transform:scaleX(0.897);transform-origin:100% 0;">Scénario</div>
<div class="t" style="right:12px;top:145.38px;font-size:14.5px;line-height:19px;color:#111;transform:scaleX(0.897);transform-origin:100% 0;">Etat</div>
<div class="t" style="right:12px;top:169.18px;font-size:14.5px;line-height:19px;color:#111;transform:scaleX(0.897);transform-origin:100% 0;">Désignation</div>
<div class="t" style="right:12px;top:193.28px;font-size:14.5px;line-height:19px;color:#111;transform:scaleX(0.897);transform-origin:100% 0;">Libellé Court</div>
<div class="t" style="right:12px;top:217.18px;font-size:14.5px;line-height:19px;color:#111;transform:scaleX(0.897);transform-origin:100% 0;">Mot Directeur</div>
<div class="t" style="right:12px;top:243.68px;font-size:14.5px;line-height:19px;color:#111;transform:scaleX(0.897);transform-origin:100% 0;">Domaine</div>
<div class="t" style="right:12px;top:272.18px;font-size:14.5px;line-height:19px;color:#111;transform:scaleX(0.897);transform-origin:100% 0;">Famille</div>
<div class="t" style="right:12px;top:300.98px;font-size:14.5px;line-height:19px;color:#111;transform:scaleX(0.897);transform-origin:100% 0;">Sous-Famille</div>
<div class="b" style="left:1225px;top:808px;width:88px;height:24px;background:#cccccc;border:1px solid #bdbdbd;box-sizing:border-box;"></div>
<svg style="left:1240px;top:813px" width="14" height="14"><polyline points="1.5,7.5 5,11 12.5,3" fill="none" stroke="#b8b8b8" stroke-width="2.2"/></svg>
<div class="t" style="left:1260px;top:810.48px;font-size:14.5px;line-height:19px;color:#7a7a7a;transform:scaleX(0.897);transform-origin:0 0;">Valider</div>
<div class="b" style="left:1318px;top:808px;width:30px;height:24px;background:#cccccc;border:1px solid #bdbdbd;box-sizing:border-box;"></div>
<svg style="left:1328px;top:813px" width="14" height="14"><g stroke="#b0b0b0" stroke-width="2.4"><line x1="2" y1="2" x2="12" y2="12"/><line x1="12" y1="2" x2="2" y2="12"/></g></svg>
<div class="b" style="left:690px;top:151px;width:319px;height:689px;background:#f0f0f0;border:1px solid #c9c9c9;box-sizing:border-box;"></div>
<div class="t" style="left:734.5px;top:157.60px;font-size:15px;line-height:20px;color:#1a1a1a;letter-spacing:-0.363px;">Création (F9)</div>
<div class="t" style="left:734.5px;top:185.04px;font-size:15px;line-height:20px;color:#1a1a1a;letter-spacing:0.075px;">Modification (F1)</div>
<div class="t" style="left:734.5px;top:212.48px;font-size:15px;line-height:20px;color:#1a1a1a;letter-spacing:0.024px;">Modification Globale (Maj+F1)</div>
<div class="t" style="left:734.5px;top:239.92px;font-size:15px;line-height:20px;color:#1a1a1a;letter-spacing:-0.092px;">Duplication (F7)</div>
<div class="t" style="left:734.5px;top:267.35px;font-size:15px;line-height:20px;color:#1a1a1a;letter-spacing:-0.484px;">Suppression (F6)</div>
<div class="t" style="left:734.5px;top:294.79px;font-size:15px;line-height:20px;color:#1a1a1a;letter-spacing:-0.532px;">Détail (F8)</div>
<div class="b" style="left:728px;top:324px;width:278px;height:1px;background:#d7d7d7;"></div>
<div class="t" style="left:734.5px;top:331.16px;font-size:15px;line-height:20px;color:#1a1a1a;letter-spacing:-0.393px;">Accès Requête(s) (Ctrl+F10)</div>
<div class="b" style="left:728px;top:360px;width:278px;height:1px;background:#d7d7d7;"></div>
<div class="t" style="left:734.5px;top:367.52px;font-size:15px;line-height:20px;color:#1a1a1a;letter-spacing:-0.107px;">Initialisation des Colonnes</div>
<div class="t" style="left:734.5px;top:394.96px;font-size:15px;line-height:20px;color:#1a1a1a;letter-spacing:-0.347px;">Gestion des Colonnes (F11)</div>
<div class="t" style="left:734.5px;top:422.40px;font-size:15px;line-height:20px;color:#1a1a1a;letter-spacing:-0.100px;">Consultation des Colonnes</div>
<div class="b" style="left:728px;top:451px;width:278px;height:1px;background:#d7d7d7;"></div>
<div class="b" style="left:722px;top:456.0px;width:180px;height:28.6px;background:#f2f05f;"></div>
<div class="t" style="left:734.5px;top:458.76px;font-size:15px;line-height:20px;color:#1a1a1a;letter-spacing:-0.265px;">Lancement Tableur (F10)</div>
<div class="b" style="left:728px;top:488px;width:278px;height:1px;background:#d7d7d7;"></div>
<div class="t" style="left:734.5px;top:495.13px;font-size:15px;line-height:20px;color:#1a1a1a;letter-spacing:-0.277px;">Gestion  groupes</div>
<div class="t" style="left:734.5px;top:522.57px;font-size:15px;line-height:20px;color:#1a1a1a;letter-spacing:-0.315px;">Gestion des correspondances</div>
<div class="b" style="left:728px;top:551px;width:278px;height:1px;background:#d7d7d7;"></div>
<div class="t" style="left:734.5px;top:558.93px;font-size:15px;line-height:20px;color:#1a1a1a;letter-spacing:-0.194px;">Gestion des boutons</div>
<div class="b" style="left:728px;top:587px;width:278px;height:1px;background:#d7d7d7;"></div>
<div class="t" style="left:734.5px;top:595.30px;font-size:15px;line-height:20px;color:#1a1a1a;letter-spacing:-0.287px;">Cas d&#x27;Emploi dans Dossier Nav.</div>
<div class="t" style="left:734.5px;top:622.74px;font-size:15px;line-height:20px;color:#1a1a1a;letter-spacing:-0.422px;">Ranger dans Dossier Nav.</div>
<div class="b" style="left:728px;top:651px;width:278px;height:1px;background:#d7d7d7;"></div>
<div class="t" style="left:734.5px;top:659.10px;font-size:15px;line-height:20px;color:#1a1a1a;letter-spacing:-0.185px;">Cas d&#x27;Emploi dans les Actions</div>
<div class="t" style="left:734.5px;top:686.54px;font-size:15px;line-height:20px;color:#1a1a1a;letter-spacing:-0.176px;">Créer un raccourci</div>
<div class="b" style="left:728px;top:715px;width:278px;height:1px;background:#d7d7d7;"></div>
<div class="t" style="left:734.5px;top:722.91px;font-size:15px;line-height:20px;color:#1a1a1a;letter-spacing:-0.179px;">Exportation</div>
<svg style="left:987px;top:728.0px" width="8" height="12"><polyline points="1.5,1.5 6,6 1.5,10.5" fill="none" stroke="#333" stroke-width="1.2"/></svg>
<div class="t" style="left:734.5px;top:750.34px;font-size:15px;line-height:20px;color:#1a1a1a;letter-spacing:-0.058px;">Importation de Données</div>
<div class="b" style="left:728px;top:779px;width:278px;height:1px;background:#d7d7d7;"></div>
<div class="t" style="left:734.5px;top:786.71px;font-size:15px;line-height:20px;color:#1a1a1a;letter-spacing:-0.142px;">Définition Filtres et Tris</div>
<div class="t" style="left:734.5px;top:814.15px;font-size:15px;line-height:20px;color:#1a1a1a;letter-spacing:-0.338px;">Sélection Filtres et Tris</div>
<svg style="left:987px;top:819.0px" width="8" height="12"><polyline points="1.5,1.5 6,6 1.5,10.5" fill="none" stroke="#333" stroke-width="1.2"/></svg>
</body></html>
